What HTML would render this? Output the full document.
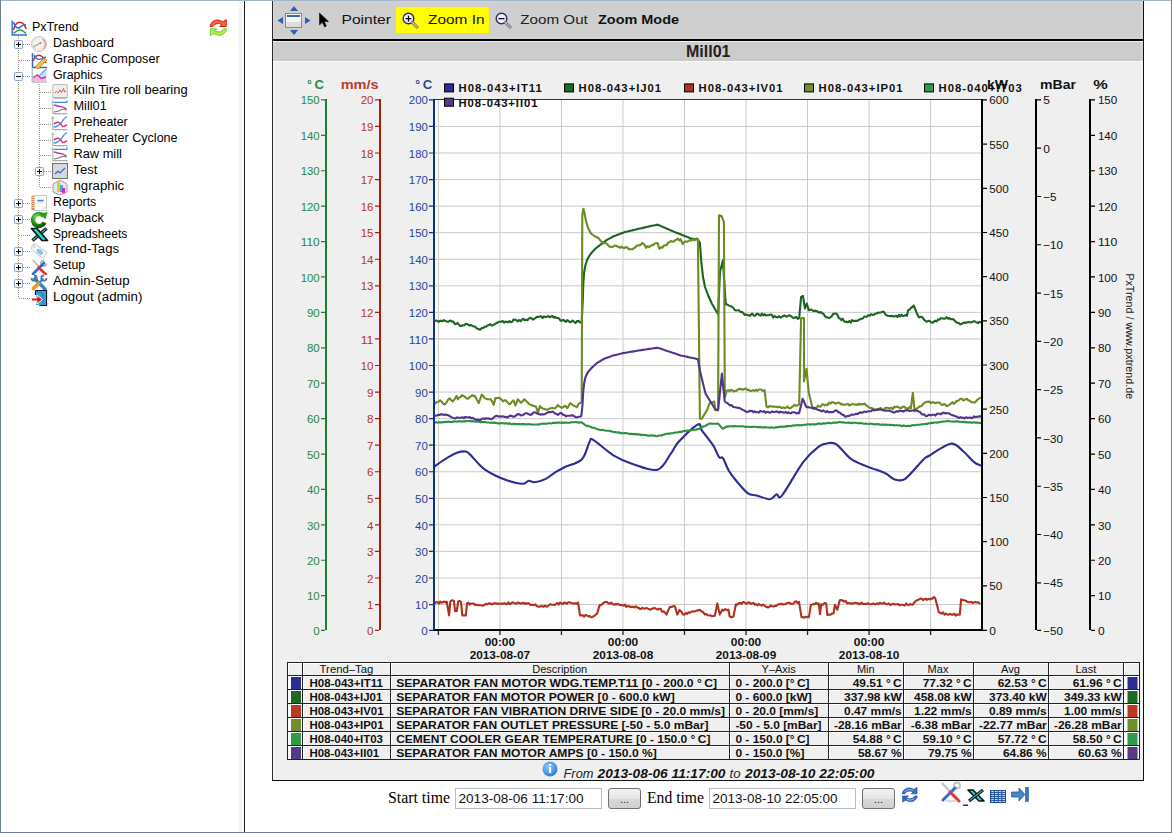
<!DOCTYPE html>
<html><head><meta charset="utf-8"><title>PxTrend</title>
<style>
html,body{margin:0;padding:0;width:1172px;height:833px;overflow:hidden;background:#fff}
svg{display:block}
text{font-family:"Liberation Sans",sans-serif}
</style></head><body>
<svg width="1172" height="833" viewBox="0 0 1172 833">
<rect x="0" y="0" width="1172" height="833" fill="#fff"/>
<line x1="18.5" y1="36" x2="18.5" y2="298" stroke="#9c9484" stroke-width="1" stroke-dasharray="1 1"/>
<line x1="39.5" y1="84" x2="39.5" y2="187" stroke="#9c9484" stroke-width="1" stroke-dasharray="1 1"/>
<line x1="23" y1="44.5" x2="31" y2="44.5" stroke="#9c9484" stroke-width="1" stroke-dasharray="1 1"/>
<line x1="19" y1="60.5" x2="31" y2="60.5" stroke="#9c9484" stroke-width="1" stroke-dasharray="1 1"/>
<line x1="23" y1="76.5" x2="31" y2="76.5" stroke="#9c9484" stroke-width="1" stroke-dasharray="1 1"/>
<line x1="40" y1="92.5" x2="52" y2="92.5" stroke="#9c9484" stroke-width="1" stroke-dasharray="1 1"/>
<line x1="40" y1="108.5" x2="52" y2="108.5" stroke="#9c9484" stroke-width="1" stroke-dasharray="1 1"/>
<line x1="40" y1="124.5" x2="52" y2="124.5" stroke="#9c9484" stroke-width="1" stroke-dasharray="1 1"/>
<line x1="40" y1="140.5" x2="52" y2="140.5" stroke="#9c9484" stroke-width="1" stroke-dasharray="1 1"/>
<line x1="40" y1="155.5" x2="52" y2="155.5" stroke="#9c9484" stroke-width="1" stroke-dasharray="1 1"/>
<line x1="44" y1="171.5" x2="52" y2="171.5" stroke="#9c9484" stroke-width="1" stroke-dasharray="1 1"/>
<line x1="40" y1="187.5" x2="52" y2="187.5" stroke="#9c9484" stroke-width="1" stroke-dasharray="1 1"/>
<line x1="23" y1="203.5" x2="31" y2="203.5" stroke="#9c9484" stroke-width="1" stroke-dasharray="1 1"/>
<line x1="23" y1="219.5" x2="31" y2="219.5" stroke="#9c9484" stroke-width="1" stroke-dasharray="1 1"/>
<line x1="19" y1="235.5" x2="31" y2="235.5" stroke="#9c9484" stroke-width="1" stroke-dasharray="1 1"/>
<line x1="23" y1="251.5" x2="31" y2="251.5" stroke="#9c9484" stroke-width="1" stroke-dasharray="1 1"/>
<line x1="23" y1="267.5" x2="31" y2="267.5" stroke="#9c9484" stroke-width="1" stroke-dasharray="1 1"/>
<line x1="23" y1="283.5" x2="31" y2="283.5" stroke="#9c9484" stroke-width="1" stroke-dasharray="1 1"/>
<line x1="19" y1="298.5" x2="31" y2="298.5" stroke="#9c9484" stroke-width="1" stroke-dasharray="1 1"/>
<text x="32.0" y="30.8" font-size="12" textLength="46.8" lengthAdjust="spacingAndGlyphs">PxTrend</text>
<rect x="14.5" y="40.5" width="8" height="8" rx="1" fill="#f4f4f4" stroke="#8ca6c6" stroke-width="1"/>
<rect x="16" y="44" width="5" height="1" fill="#000"/>
<rect x="18" y="42" width="1" height="5" fill="#000"/>
<text x="53.0" y="46.7" font-size="12" textLength="61.0" lengthAdjust="spacingAndGlyphs">Dashboard</text>
<text x="53.0" y="62.6" font-size="12" textLength="106.8" lengthAdjust="spacingAndGlyphs">Graphic Composer</text>
<rect x="14.5" y="72.5" width="8" height="8" rx="1" fill="#f4f4f4" stroke="#8ca6c6" stroke-width="1"/>
<rect x="16" y="76" width="5" height="1" fill="#000"/>
<text x="53.0" y="78.5" font-size="12" textLength="49.5" lengthAdjust="spacingAndGlyphs">Graphics</text>
<text x="73.5" y="94.4" font-size="12" textLength="114.1" lengthAdjust="spacingAndGlyphs">Kiln Tire roll bearing</text>
<text x="73.5" y="110.3" font-size="12" textLength="33.3" lengthAdjust="spacingAndGlyphs">Mill01</text>
<text x="73.5" y="126.2" font-size="12" textLength="54.199999999999996" lengthAdjust="spacingAndGlyphs">Preheater</text>
<text x="73.5" y="142.1" font-size="12" textLength="104.1" lengthAdjust="spacingAndGlyphs">Preheater Cyclone</text>
<text x="73.5" y="158.0" font-size="12" textLength="48.4" lengthAdjust="spacingAndGlyphs">Raw mill</text>
<rect x="35.5" y="167.5" width="8" height="8" rx="1" fill="#f4f4f4" stroke="#8ca6c6" stroke-width="1"/>
<rect x="37" y="171" width="5" height="1" fill="#000"/>
<rect x="39" y="169" width="1" height="5" fill="#000"/>
<text x="73.5" y="173.9" font-size="12" textLength="23.8" lengthAdjust="spacingAndGlyphs">Test</text>
<text x="73.5" y="189.8" font-size="12" textLength="50.699999999999996" lengthAdjust="spacingAndGlyphs">ngraphic</text>
<rect x="14.5" y="199.5" width="8" height="8" rx="1" fill="#f4f4f4" stroke="#8ca6c6" stroke-width="1"/>
<rect x="16" y="203" width="5" height="1" fill="#000"/>
<rect x="18" y="201" width="1" height="5" fill="#000"/>
<text x="53.0" y="205.7" font-size="12" textLength="43.3" lengthAdjust="spacingAndGlyphs">Reports</text>
<rect x="14.5" y="215.5" width="8" height="8" rx="1" fill="#f4f4f4" stroke="#8ca6c6" stroke-width="1"/>
<rect x="16" y="219" width="5" height="1" fill="#000"/>
<rect x="18" y="217" width="1" height="5" fill="#000"/>
<text x="53.0" y="221.6" font-size="12" textLength="50.8" lengthAdjust="spacingAndGlyphs">Playback</text>
<text x="53.0" y="237.5" font-size="12" textLength="74.3" lengthAdjust="spacingAndGlyphs">Spreadsheets</text>
<rect x="14.5" y="247.5" width="8" height="8" rx="1" fill="#f4f4f4" stroke="#8ca6c6" stroke-width="1"/>
<rect x="16" y="251" width="5" height="1" fill="#000"/>
<rect x="18" y="249" width="1" height="5" fill="#000"/>
<text x="53.0" y="253.4" font-size="12" textLength="66.1" lengthAdjust="spacingAndGlyphs">Trend-Tags</text>
<rect x="14.5" y="263.5" width="8" height="8" rx="1" fill="#f4f4f4" stroke="#8ca6c6" stroke-width="1"/>
<rect x="16" y="267" width="5" height="1" fill="#000"/>
<rect x="18" y="265" width="1" height="5" fill="#000"/>
<text x="53.0" y="269.3" font-size="12" textLength="32.199999999999996" lengthAdjust="spacingAndGlyphs">Setup</text>
<rect x="14.5" y="279.5" width="8" height="8" rx="1" fill="#f4f4f4" stroke="#8ca6c6" stroke-width="1"/>
<rect x="16" y="283" width="5" height="1" fill="#000"/>
<rect x="18" y="281" width="1" height="5" fill="#000"/>
<text x="53.0" y="285.2" font-size="12" textLength="76.5" lengthAdjust="spacingAndGlyphs">Admin-Setup</text>
<text x="53.0" y="301.1" font-size="12" textLength="89.39999999999999" lengthAdjust="spacingAndGlyphs">Logout (admin)</text>
<g transform="translate(11,20)"><path d="M1.2 0.5 V15 H16" fill="none" stroke="#2f6fd0" stroke-width="1.4"/><path d="M2.5 10 C4 4,6.5 2,9 2.2 C12 2.5,14 5,15 9" fill="none" stroke="#f02020" stroke-width="1.6"/><path d="M2.5 2 C4 7,6 9,8.5 7.5 C11 6,12.5 4,15 5" fill="none" stroke="#2a6ee8" stroke-width="1.6"/><path d="M2.5 13.5 C5 11,7 9.5,9.5 10 C12 10.5,13.5 12,15 13.5" fill="none" stroke="#3a9a3a" stroke-width="1.5"/></g>
<g transform="translate(31,36)"><circle cx="8" cy="8" r="7.5" fill="#f2f2f2" stroke="#c8c8c8"/><circle cx="8" cy="8" r="6" fill="none" stroke="#dcdcdc" stroke-width="0.8" stroke-dasharray="1 1.5"/><path d="M11.5 3 A6 6 0 0 1 12 13" fill="none" stroke="#f0a090" stroke-width="1.5"/><path d="M4 10 L9.5 7" stroke="#e06060" stroke-width="1"/><circle cx="9.5" cy="7" r="0.9" fill="#888"/><path d="M2.5 9.5 L4 11.5" stroke="#7fdf7f" stroke-width="1.5"/></g>
<g transform="translate(31,52)"><path d="M1.5 1 V15.5 H16" fill="none" stroke="#2f6fd0" stroke-width="1.5"/><path d="M2 9 C5 1,11 1,15 11" fill="none" stroke="#f02020" stroke-width="1.6"/><path d="M3 3 C6 10,10 7,15 5" fill="none" stroke="#2a6ee8" stroke-width="1.4"/><path d="M4 15 L13 6 L16 8 L7 17 Z" fill="#f0c040" stroke="#c08020" stroke-width="0.8"/></g>
<g transform="translate(31,68)"><path d="M1.2 1 V14 H16" fill="none" stroke="#9a9a9a" stroke-width="0.9"/><path d="M8 13.5 C10 7,12 3,15.5 1 V13.5 Z" fill="#c8dcf8"/><path d="M8 8.5 C10.5 5,12.5 2.5,15.5 1.2" fill="none" stroke="#5a9af0" stroke-width="1.2"/><path d="M2 9.5 L6.5 6.8 L10.2 10.4 L15 9 V13.6 H2 Z" fill="#f4b8e4"/><path d="M2 9.5 L6.5 6.8 L10.2 10.4 L15 9" fill="none" stroke="#d030a0" stroke-width="1.4"/><path d="M4 13.8 V15 M8 13.8 V15 M12 13.8 V15" stroke="#a0a0a0" stroke-width="0.7"/></g>
<g transform="translate(52,84)"><rect x="0.8" y="0.5" width="14.5" height="14" rx="1.5" fill="#eeeeee" stroke="#bcbcbc"/><path d="M1.5 13.5 H15" stroke="#a8a8a8" stroke-width="0.8"/><path d="M2.5 9 L4.5 7.5 L6 9 L8 6 L9.5 8.5 L11.5 4.5 L12.5 8 L14 7" fill="none" stroke="#e05a5a" stroke-width="1"/></g>
<g transform="translate(52,100)"><path d="M0.8 1.5 V13.6 H15.5" fill="none" stroke="#9a9a9a" stroke-width="0.9"/><path d="M-0.4 2.6 L0.8 0.6 L2 2.6" fill="none" stroke="#9a9a9a" stroke-width="0.7"/><path d="M4 13.6 V15 M7.5 13.6 V15 M11 13.6 V15 M14.5 13.6 V15" stroke="#a8a8a8" stroke-width="0.7"/><path d="M2 2.4 H14.5 L15.5 0.6" fill="none" stroke="#3a8af0" stroke-width="1.3"/><path d="M1.8 4.8 C4 5.5,5 6,7 6.2 C9 6.4,11 6.5,14.6 9" fill="none" stroke="#d03a90" stroke-width="1.4"/><path d="M1.8 12 C4 11.8,6 11.2,8 10.4 C10 9.5,12 8.2,14.6 10.2" fill="none" stroke="#707070" stroke-width="1.1"/></g>
<g transform="translate(52,116)"><path d="M0.8 1.5 V13.6 H15.5" fill="none" stroke="#9a9a9a" stroke-width="0.9"/><path d="M-0.4 2.6 L0.8 0.6 L2 2.6" fill="none" stroke="#9a9a9a" stroke-width="0.7"/><path d="M4 13.6 V15 M7.5 13.6 V15 M11 13.6 V15 M14.5 13.6 V15" stroke="#a8a8a8" stroke-width="0.7"/><path d="M1.8 11 C5 11,7 9.5,9 7 C11 4,12.5 1.5,15 0.8" fill="none" stroke="#4a90f0" stroke-width="1.4"/><path d="M1.8 8 C3.5 7,5.5 5.5,7 6.5 C8.5 7.5,10 10.5,11 10.5 C12.5 10.5,13.5 9.5,15 9" fill="none" stroke="#d02a70" stroke-width="1.4"/></g>
<g transform="translate(52,132)"><path d="M0.8 1.5 V13.6 H15.5" fill="none" stroke="#9a9a9a" stroke-width="0.9"/><path d="M-0.4 2.6 L0.8 0.6 L2 2.6" fill="none" stroke="#9a9a9a" stroke-width="0.7"/><path d="M4 13.6 V15 M7.5 13.6 V15 M11 13.6 V15 M14.5 13.6 V15" stroke="#a8a8a8" stroke-width="0.7"/><path d="M1.8 11 C5 11,7 9.5,9 7 C11 4,12.5 1.5,15 0.8" fill="none" stroke="#4a90f0" stroke-width="1.4"/><path d="M1.8 8 C3.5 7,5.5 5.5,7 6.5 C8.5 7.5,10 10.5,11 10.5 C12.5 10.5,13.5 9.5,15 9" fill="none" stroke="#d02a70" stroke-width="1.4"/></g>
<g transform="translate(52,147)"><path d="M0.8 1.5 V13.6 H15.5" fill="none" stroke="#9a9a9a" stroke-width="0.9"/><path d="M-0.4 2.6 L0.8 0.6 L2 2.6" fill="none" stroke="#9a9a9a" stroke-width="0.7"/><path d="M4 13.6 V15 M7.5 13.6 V15 M11 13.6 V15 M14.5 13.6 V15" stroke="#a8a8a8" stroke-width="0.7"/><path d="M2 2.4 H14.5 L15.5 0.6" fill="none" stroke="#3a8af0" stroke-width="1.3"/><path d="M1.8 4.8 C4 5.5,5 6,7 6.2 C9 6.4,11 6.5,14.6 9" fill="none" stroke="#d03a90" stroke-width="1.4"/><path d="M1.8 12 C4 11.8,6 11.2,8 10.4 C10 9.5,12 8.2,14.6 10.2" fill="none" stroke="#707070" stroke-width="1.1"/></g>
<g transform="translate(52,163)"><rect x="0.5" y="0.5" width="15" height="15" fill="#d8d8d8" stroke="#707070"/><path d="M3 11 L6 8 L8 10 L13 5" fill="none" stroke="#4060e0" stroke-width="1.2"/></g>
<g transform="translate(52,179)"><path d="M1 5 L8 1 L15 5 V13 L8 16 L1 13Z" fill="#e8e8e8" stroke="#a0a0a0"/><rect x="5" y="2" width="3" height="11" fill="#e0d020"/><rect x="8" y="6" width="3" height="7" fill="#20c0d0"/><rect x="10" y="9" width="3" height="5" fill="#e020e0"/></g>
<g transform="translate(31,195)"><rect x="2.5" y="0.5" width="13" height="15" fill="#fbfbfb" stroke="#c8c8c8"/><path d="M11 15.5 L15.5 11" stroke="#d0d0d0" stroke-width="1"/><rect x="0.5" y="1" width="3" height="14" fill="#d88850"/><path d="M1 2.5 H3.5 M1 4.5 H3.5 M1 6.5 H3.5 M1 8.5 H3.5 M1 10.5 H3.5 M1 12.5 H3.5" stroke="#f4e0d0" stroke-width="0.8"/><rect x="6" y="4" width="7" height="4" fill="#dfe8f6"/><rect x="6.5" y="5" width="6" height="1.2" fill="#4a7ed0"/></g>
<g transform="translate(31,211)"><defs><radialGradient id="pbg" cx="0.35" cy="0.3" r="0.8"><stop offset="0" stop-color="#8ee070"/><stop offset="0.6" stop-color="#2a9a20"/><stop offset="1" stop-color="#0a5a0a"/></radialGradient></defs><path d="M12.5 5 A6 6 0 1 0 13.5 11.5" fill="none" stroke="url(#pbg)" stroke-width="4.4"/><path d="M8.5 2.5 L16.5 1 L14.5 8.5 Z" fill="#2c9c22"/></g>
<g transform="translate(31,227)"><path d="M15.5 1.5 L1.5 13.5" stroke="#111" stroke-width="3.4"/><path d="M15 1.9 L2 13.1" stroke="#30c8c0" stroke-width="1.2"/><path d="M0.5 1.5 H6 L16.5 13.5 H11 Z" fill="#20d8d8" stroke="#111" stroke-width="1.7" stroke-linejoin="round"/></g>
<g transform="translate(31,243)"><path d="M1 2.5 L4 0.5 L16 9.5 L12 15.5 L0.5 6.5 Z" fill="#f6f8fb" stroke="#c4c8d0" stroke-width="1"/><circle cx="3.3" cy="3.5" r="1" fill="#fff" stroke="#b0b4bc" stroke-width="0.6"/><path d="M6 6 L10 6.5 L12.5 10 L10 12.5 L5.5 9 Z" fill="#8ec0f0"/></g>
<g transform="translate(31,259)"><path d="M1.5 1 L9 8.5" stroke="#b8b8b8" stroke-width="1.6"/><path d="M13 1.5 A2.8 2.8 0 1 0 15.5 4.5" fill="none" stroke="#b0b0b0" stroke-width="1.8"/><path d="M13 4 L2 15" stroke="#2a6ae0" stroke-width="2.6" stroke-linecap="round"/><path d="M7.5 8.5 L15 15.5" stroke="#e03030" stroke-width="2.6" stroke-linecap="round"/><path d="M3 16 H14" stroke="#d8d8d8" stroke-width="0.8"/></g>
<g transform="translate(31,275)"><path d="M3.5 3.5 L14 14" stroke="#3a86cc" stroke-width="3.4" stroke-linecap="round"/><path d="M12.5 3.5 L3 13" stroke="#3a86cc" stroke-width="1.8"/><circle cx="3.2" cy="3.2" r="2.6" fill="none" stroke="#4a7494" stroke-width="1.6"/><circle cx="12.8" cy="3.2" r="2.6" fill="none" stroke="#4a7494" stroke-width="1.6"/><rect x="0" y="0" width="3" height="3" fill="#fff"/><rect x="13" y="0" width="3" height="3" fill="#fff"/><path d="M7.5 8.5 L2.5 13.5" stroke="#f29420" stroke-width="3.8" stroke-linecap="round"/></g>
<g transform="translate(31,290)"><path d="M4.5 0.5 H15.5 V15.5 H8.5" fill="#3aa0e0" stroke="#101820" stroke-width="1.2"/><rect x="5" y="1" width="10" height="14" fill="#3aa0e0"/><path d="M5 1 L12 4 V15" fill="none" stroke="#2070b0" stroke-width="0.8"/><path d="M4.5 0.5 V5" stroke="#101820" stroke-width="1.2"/><path d="M0.5 8 H6 V5 L11.5 9.5 L6 14 V11 H0.5 Z" fill="#e01818" stroke="#fff" stroke-width="1"/></g>
<g transform="translate(209.5,18.8) scale(1.1)"><path d="M0.5 7 C1 3,5 0.3,9 1.4 L12 2.6 L15.2 0.8 L15.2 7 L9.3 7 L11.3 5.3 C9 3.9,5 3.6,3 7 Z" fill="#f46a3a" stroke="#d41a10" stroke-width="0.9"/><path d="M15.5 9.2 C15 13,11 15.7,7 14.6 L4 13.4 L0.8 15.2 L0.8 9.2 L6.7 9.2 L4.7 10.9 C7 12.3,11 12.6,13 9.2 Z" fill="#b4ec50" stroke="#6ccc20" stroke-width="0.9"/></g>
<rect x="272" y="1" width="1" height="780" fill="#2a2a2a"/>
<rect x="273" y="1" width="870" height="38" fill="#cfcfcf"/>
<rect x="273" y="1" width="870" height="1" fill="#d3d2d1"/>
<rect x="273" y="39" width="870" height="2" fill="#000"/>
<rect x="273" y="41" width="870" height="1" fill="#f2f2f2"/>
<rect x="273" y="42" width="870" height="19" fill="#cccccc"/>
<rect x="273" y="61" width="870" height="719" fill="#efefef"/>
<rect x="273" y="61" width="870" height="1" fill="#f8f8f8"/>
<rect x="273" y="61" width="1" height="719" fill="#f8f8f8"/>
<rect x="1141" y="41" width="1" height="739" fill="#f6f6f6"/>
<rect x="273" y="42" width="1" height="18" fill="#d6d6d6"/>
<rect x="1141" y="42" width="1" height="18" fill="#d8d8d8"/>
<rect x="1143" y="1" width="1" height="780" fill="#111"/>
<rect x="1141" y="1" width="1" height="38" fill="#dadada"/>
<rect x="272" y="780" width="872" height="1" fill="#111"/>
<rect x="273" y="1" width="1" height="38" fill="#d8d8d8"/>
<rect x="273" y="37" width="870" height="1" fill="#d6d6d6"/>
<rect x="273" y="59" width="870" height="1" fill="#c8c8c8"/>
<g><path d="M290 11 L294 6 L298 11 Z" fill="#2a5fb0"/><path d="M290 30 L294 35 L298 30 Z" fill="#2a5fb0"/><path d="M283 17 L277.5 20.5 L283 24 Z" fill="#2a5fb0"/><path d="M305 17 L310.5 20.5 L305 24 Z" fill="#2a5fb0"/><rect x="285.5" y="13.5" width="16" height="14" fill="#f4f4f4" stroke="#8a8a8a"/><rect x="287" y="15" width="13" height="2" fill="#3a68b0"/><rect x="286" y="22" width="15" height="5" fill="#dcdcdc"/></g>
<path d="M319.5 13 L319.5 25 L322.3 22.3 L324.6 27 L326.4 26 L324.2 21.5 L328.5 21.5 Z" fill="#000" stroke="#000" stroke-width="0.5"/>
<text x="341.5" y="23.5" font-size="12.5" fill="#111" textLength="49.5" lengthAdjust="spacingAndGlyphs">Pointer</text>
<rect x="396" y="7" width="93" height="26" fill="#ffff00"/>
<rect x="396" y="7" width="93" height="1" fill="#e8e8a0"/>
<g transform="translate(402,12)"><circle cx="6.5" cy="6.5" r="5.3" fill="#eef0ff" stroke="#2a2a6a" stroke-width="1.4"/><path d="M10.5 10.5 L15 15" stroke="#707070" stroke-width="3" stroke-linecap="round"/><path d="M10.5 10.5 L15 15" stroke="#c8c0b8" stroke-width="1.2" stroke-linecap="round"/><rect x="3.5" y="6" width="6" height="1.3" fill="#000"/><rect x="5.85" y="3.6" width="1.3" height="6" fill="#000"/></g>
<text x="428" y="23.5" font-size="12.5" fill="#111" textLength="56.5" lengthAdjust="spacingAndGlyphs">Zoom In</text>
<g transform="translate(495,12)"><circle cx="6.5" cy="6.5" r="5.3" fill="#eef0ff" stroke="#2a2a6a" stroke-width="1.4"/><path d="M10.5 10.5 L15 15" stroke="#707070" stroke-width="3" stroke-linecap="round"/><path d="M10.5 10.5 L15 15" stroke="#c8c0b8" stroke-width="1.2" stroke-linecap="round"/><rect x="3.5" y="6" width="6" height="1.3" fill="#000"/></g>
<text x="520.3" y="23.5" font-size="12.5" fill="#222" textLength="67.5" lengthAdjust="spacingAndGlyphs">Zoom Out</text>
<text x="598" y="24" font-size="12.5" font-weight="bold" fill="#111" textLength="81" lengthAdjust="spacingAndGlyphs">Zoom Mode</text>
<text x="686" y="57" font-size="16" font-weight="bold" fill="#222" textLength="44.5" lengthAdjust="spacingAndGlyphs">Mill01</text>
<rect x="435" y="100" width="546" height="529" fill="#fff"/>
<path d="M435 126.46H981 M435 153.02H981 M435 179.58H981 M435 206.14H981 M435 232.70H981 M435 259.26H981 M435 285.82H981 M435 312.38H981 M435 338.94H981 M435 365.50H981 M435 392.06H981 M435 418.62H981 M435 445.18H981 M435 471.74H981 M435 498.30H981 M435 524.86H981 M435 551.42H981 M435 577.98H981 M435 604.54H981 M438.40 100V629 M499.92 100V629 M561.45 100V629 M622.97 100V629 M684.50 100V629 M746.02 100V629 M807.55 100V629 M869.08 100V629 M930.60 100V629" stroke="#c9c9c9" stroke-width="1" fill="none"/>
<g clip-path="url(#plotclip)">
<defs><clipPath id="plotclip"><rect x="435" y="100" width="546" height="529"/></clipPath></defs>
<path d="M434.8 466.3 C435.9 465.5 439.1 463.1 441.5 461.5 C443.9 459.9 446.6 458.1 449.2 456.7 C451.8 455.2 454.2 453.7 456.9 452.8 C459.6 451.9 463.3 451.2 465.5 451.5 C467.7 451.8 467.9 452.4 470.3 454.7 C472.7 457.0 477.3 462.7 479.9 465.3 C482.5 467.9 483.1 468.4 485.7 470.1 C488.3 471.8 491.8 473.8 495.3 475.5 C498.8 477.2 503.3 479.1 506.8 480.3 C510.3 481.6 513.5 482.4 516.4 483.0 C519.3 483.6 522.0 484.0 524.1 483.6 C526.2 483.2 527.1 480.9 528.9 480.7 C530.7 480.5 532.0 482.5 534.7 482.2 C537.4 481.9 541.9 480.7 545.3 479.1 C548.7 477.5 551.7 474.6 554.9 472.6 C558.1 470.6 560.0 469.4 564.5 467.2 C569.0 465.0 577.6 463.6 581.7 459.5 C585.9 455.4 587.5 445.6 589.4 442.3 C591.3 439.0 589.2 437.7 593.2 439.9 C597.2 442.1 606.8 451.3 613.4 455.3 C620.0 459.3 625.2 461.5 632.6 463.9 C640.0 466.3 651.2 471.5 657.6 469.7 C664.0 467.9 667.5 457.9 671.0 453.3 C674.5 448.7 674.2 446.6 678.7 441.8 C683.2 437.0 694.0 426.4 697.9 424.5 C701.8 422.6 699.2 426.8 701.8 430.3 C704.4 433.8 710.4 441.1 713.3 445.6 C716.2 450.1 717.5 455.1 719.1 457.2 C720.7 459.3 721.3 455.9 722.9 458.1 C724.5 460.3 726.7 467.1 728.7 470.6 C730.7 474.1 731.8 475.5 735.0 479.3 C738.2 483.1 744.1 490.5 747.7 493.2 C751.3 495.9 752.9 494.4 756.6 495.4 C760.3 496.4 766.6 499.4 769.9 499.2 C773.2 499.0 774.6 494.9 776.6 494.3 C778.6 493.7 777.7 500.8 782.1 495.4 C786.5 490.0 797.1 470.2 803.2 462.1 C809.3 454.0 814.6 449.7 818.7 446.6 C822.8 443.5 824.6 443.7 827.6 443.3 C830.6 442.9 832.6 441.8 836.5 444.4 C840.4 447.0 845.7 455.1 850.9 458.8 C856.1 462.5 861.8 464.2 867.5 466.6 C873.2 469.0 880.8 471.1 885.3 473.2 C889.8 475.3 890.9 478.3 894.2 479.2 C897.5 480.1 900.4 482.0 905.2 478.8 C910.0 475.6 918.9 463.8 923.0 459.9 C927.1 456.0 925.0 458.2 929.6 455.5 C934.2 452.8 945.2 444.4 950.7 443.7 C956.2 442.9 959.0 447.9 962.9 451.0 C966.8 454.1 971.0 459.7 974.0 462.1 C977.0 464.5 979.6 464.9 980.7 465.5" fill="none" stroke="#2c2c94" stroke-width="2.1" stroke-linejoin="round" stroke-linecap="round"/>
<path d="M434.8 320.7 L436.1 320.6 L437.4 320.9 L438.7 321.9 L440.0 320.8 L441.3 320.9 L442.7 321.1 L444.0 320.1 L445.3 321.0 L446.6 321.4 L447.9 321.8 L449.2 321.1 L450.6 320.5 L451.9 321.6 L453.3 321.5 L454.7 323.9 L456.1 324.1 L457.4 322.9 L458.8 324.6 L460.2 325.9 L461.5 325.9 L462.9 325.2 L464.3 325.1 L465.7 324.0 L467.0 323.7 L468.4 325.0 L469.7 325.6 L471.0 325.0 L472.4 325.8 L473.7 326.5 L475.0 326.5 L476.4 328.2 L477.7 328.7 L479.0 329.4 L480.4 329.6 L481.9 328.1 L483.3 327.8 L484.7 326.8 L486.2 326.6 L487.6 325.5 L489.0 325.0 L490.3 324.1 L491.7 325.6 L493.1 325.2 L494.5 324.4 L495.8 323.6 L497.2 322.7 L498.6 322.1 L499.9 321.7 L501.3 321.7 L502.7 321.0 L504.1 322.7 L505.4 321.6 L506.8 321.7 L508.2 322.4 L509.5 321.0 L510.9 322.3 L512.3 321.8 L513.7 319.4 L515.0 319.7 L516.4 320.3 L517.8 321.3 L519.1 320.1 L520.5 321.3 L521.9 319.7 L523.3 318.8 L524.6 320.2 L526.0 319.8 L527.4 320.3 L528.7 318.7 L530.1 317.9 L531.5 318.3 L532.9 319.6 L534.2 318.8 L535.6 317.9 L537.0 316.8 L538.4 317.0 L539.8 316.5 L541.2 316.2 L542.6 318.0 L544.0 316.3 L545.4 317.2 L546.8 316.7 L548.2 316.0 L549.6 317.2 L551.0 316.5 L552.4 316.0 L553.7 317.7 L555.0 316.8 L556.4 318.0 L557.8 317.9 L559.1 318.4 L560.5 320.7 L561.8 320.6 L563.1 319.8 L564.5 320.7 L565.9 321.8 L567.2 320.2 L568.6 320.9 L569.9 322.2 L571.3 321.8 L572.6 320.5 L574.0 321.7 L575.5 323.0 L577.1 321.0 L578.6 321.1 L580.2 322.5 L581.7 321.8 L582.8 300.0 L583.3 283.0 L584.2 272.0 L585.5 265.0 L587.5 259.0 L589.2 256.2 L591.0 253.5 L592.3 252.0 L593.7 250.5 L595.0 249.0 L596.7 247.7 L598.3 246.3 L600.0 245.0 L601.5 243.9 L603.0 242.8 L604.5 241.6 L606.0 240.5 L607.4 239.7 L608.8 238.9 L610.2 238.1 L611.6 237.3 L613.0 236.5 L614.3 236.0 L615.7 235.5 L617.0 235.0 L618.3 234.5 L619.7 234.0 L621.0 233.5 L622.3 233.0 L623.7 232.5 L625.0 232.0 L626.4 231.7 L627.7 231.4 L629.1 231.0 L630.5 230.7 L631.8 230.4 L633.2 230.1 L634.5 229.8 L635.9 229.5 L637.3 229.1 L638.6 228.8 L640.0 228.5 L641.4 228.2 L642.7 227.9 L644.1 227.6 L645.4 227.3 L646.8 227.0 L648.1 226.7 L649.5 226.4 L650.8 226.1 L652.2 225.8 L653.5 225.5 L654.9 225.2 L656.2 224.9 L657.6 224.6 L658.9 225.2 L660.3 225.8 L661.6 226.4 L663.0 227.0 L664.3 227.6 L665.6 228.1 L667.0 228.7 L668.3 229.3 L669.7 229.9 L671.0 230.5 L672.4 231.1 L673.7 231.6 L675.1 232.2 L676.5 232.7 L677.9 233.2 L679.2 233.8 L680.6 234.3 L682.0 234.9 L683.3 235.4 L684.7 236.0 L686.1 236.5 L687.5 237.1 L688.8 237.6 L690.2 238.2 L691.7 238.5 L693.3 238.8 L694.8 239.0 L696.4 239.3 L697.9 239.6 L699.9 243.0 L701.3 262.0 L703.0 277.0 L705.0 287.0 L706.5 291.0 L708.0 295.0 L709.3 298.0 L710.7 301.0 L712.0 304.0 L713.7 306.8 L715.3 309.7 L717.0 312.5 L718.1 314.1 L720.0 271.8 L721.5 266.1 L722.9 260.3 L724.3 282.4 L725.8 304.5 L727.2 304.5 L728.7 305.4 L730.3 306.1 L731.9 306.7 L733.4 308.0 L735.0 310.3 L736.4 310.5 L737.7 310.3 L739.1 310.3 L740.4 311.9 L741.8 312.0 L743.2 312.9 L744.6 314.9 L745.9 314.4 L747.3 315.1 L748.6 315.2 L750.0 315.9 L751.3 314.1 L752.6 313.9 L754.0 315.8 L755.3 315.5 L756.6 314.0 L757.9 313.7 L759.3 315.1 L760.6 315.6 L761.9 313.5 L763.3 315.4 L764.6 314.2 L766.0 315.6 L767.5 315.2 L768.9 315.1 L770.4 314.6 L771.8 314.8 L773.2 317.6 L774.7 316.1 L776.1 317.1 L777.5 317.5 L779.0 316.2 L780.4 317.6 L781.9 316.9 L783.3 315.9 L784.7 315.5 L786.2 316.8 L787.6 316.1 L789.1 315.2 L790.5 315.9 L792.0 317.0 L793.4 318.0 L794.9 317.6 L796.3 317.0 L797.8 318.8 L799.2 318.0 L801.1 296.9 L803.0 295.9 L804.9 308.4 L806.8 303.6 L808.8 310.3 L810.1 309.8 L811.5 309.6 L812.8 310.6 L814.2 311.3 L815.5 310.6 L816.8 311.2 L818.2 312.0 L819.5 312.8 L820.9 312.0 L822.2 313.2 L823.5 313.8 L824.9 316.1 L826.2 317.3 L827.6 317.4 L828.9 318.0 L830.4 317.4 L831.8 316.1 L833.2 313.9 L834.7 313.8 L836.0 313.6 L837.4 314.6 L838.7 317.9 L840.0 318.4 L841.3 320.1 L842.6 318.6 L844.0 321.2 L845.3 321.9 L846.7 321.7 L848.0 322.2 L849.4 321.0 L850.8 322.6 L852.2 320.1 L853.5 321.2 L854.9 320.9 L856.2 320.9 L857.6 320.8 L858.9 319.8 L860.3 319.1 L861.6 318.8 L862.9 318.5 L864.3 316.5 L865.6 316.7 L867.0 316.7 L868.3 315.1 L869.7 315.7 L871.1 314.2 L872.4 314.9 L873.8 314.8 L875.2 313.7 L876.6 313.5 L878.0 312.6 L879.3 312.8 L880.7 312.5 L882.1 311.9 L883.5 311.5 L885.0 313.7 L886.4 315.3 L887.8 315.7 L889.3 316.0 L890.7 316.1 L892.1 315.8 L893.4 316.6 L894.8 316.2 L896.2 315.8 L897.5 316.8 L898.9 314.8 L900.3 316.5 L901.6 314.6 L903.0 316.1 L904.4 315.7 L905.7 315.0 L907.1 315.7 L908.0 310.3 L909.5 309.6 L910.9 307.9 L912.3 307.0 L913.8 305.5 L915.7 310.3 L917.6 315.1 L919.1 317.4 L920.7 316.8 L922.2 317.3 L923.8 319.2 L925.3 320.9 L926.8 321.7 L928.2 320.8 L929.6 321.0 L931.1 322.2 L932.5 322.8 L933.9 321.7 L935.3 320.7 L936.7 321.4 L938.1 319.4 L939.4 319.8 L940.8 318.2 L942.2 318.3 L943.6 318.8 L945.0 318.6 L946.4 317.1 L947.8 318.7 L949.2 318.0 L950.6 319.1 L952.0 319.1 L953.4 319.2 L954.8 320.7 L956.2 322.2 L957.6 322.9 L959.0 323.1 L960.4 324.4 L961.8 323.8 L963.1 323.0 L964.5 322.5 L965.8 323.0 L967.2 322.3 L968.5 321.9 L969.8 322.2 L971.2 322.5 L972.5 321.9 L973.9 321.2 L975.2 321.5 L976.7 322.6 L978.1 323.1 L979.5 321.9 L981.0 322.2" fill="none" stroke="#1b6520" stroke-width="2.1" stroke-linejoin="round" stroke-linecap="round"/>
<path d="M434.8 603.4 L436.1 602.3 L437.4 601.9 L438.8 603.6 L440.1 601.5 L441.4 602.8 L442.7 602.3 L444.1 601.5 L445.4 602.4 L446.7 601.5 L449.1 615.4 L450.3 601.5 L452.1 600.2 L453.9 601.0 L455.1 611.0 L456.8 611.0 L458.2 601.5 L459.6 600.9 L461.0 602.0 L462.3 615.4 L464.1 615.3 L465.8 615.4 L467.0 603.4 L468.4 602.6 L469.7 604.6 L471.1 603.5 L472.4 603.5 L473.8 603.5 L475.1 605.0 L476.4 604.8 L477.8 605.1 L479.1 605.3 L480.5 605.3 L481.8 605.5 L483.1 605.7 L484.4 605.0 L485.8 603.9 L487.1 604.4 L488.4 603.6 L489.8 603.2 L491.1 604.1 L492.4 604.5 L493.7 603.3 L495.1 603.4 L496.4 603.4 L497.7 604.1 L499.0 603.6 L500.4 603.7 L501.7 603.4 L503.0 603.9 L504.4 603.1 L505.7 603.9 L507.1 604.1 L508.4 602.3 L509.8 604.1 L511.1 603.6 L512.5 602.2 L513.8 602.9 L515.1 603.2 L516.5 603.8 L517.8 602.6 L519.2 603.0 L520.5 603.6 L521.9 603.4 L523.2 602.7 L524.6 603.9 L525.9 603.1 L527.3 603.8 L528.7 603.1 L530.0 604.5 L531.4 604.9 L532.8 604.8 L534.1 605.2 L535.5 604.4 L536.8 606.2 L538.2 606.6 L539.6 606.8 L540.9 606.1 L542.3 606.3 L543.7 606.7 L545.0 605.5 L546.4 606.6 L547.8 606.3 L549.1 604.9 L550.5 604.1 L551.8 604.7 L553.2 604.8 L554.6 605.0 L555.9 604.2 L557.3 603.0 L558.7 604.5 L560.0 602.6 L561.4 603.4 L562.8 604.0 L564.2 602.6 L565.6 602.9 L567.0 603.8 L568.4 602.3 L569.8 602.3 L571.1 603.0 L572.5 603.4 L573.9 603.6 L575.3 603.2 L576.7 603.7 L578.1 602.7 L580.0 615.4 L581.5 615.4 L582.9 615.4 L584.3 616.6 L585.6 614.9 L587.0 615.5 L588.3 616.4 L589.7 616.1 L591.0 617.3 L592.4 617.0 L594.0 616.1 L595.6 614.7 L597.2 613.4 L599.6 605.1 L601.1 605.1 L602.6 603.7 L604.1 602.4 L605.6 602.0 L607.0 602.0 L608.4 603.3 L609.8 603.7 L611.2 602.5 L612.6 604.2 L614.1 604.7 L615.5 604.0 L616.9 604.4 L618.3 603.9 L619.7 604.9 L621.1 605.1 L622.4 605.3 L623.8 605.7 L625.1 604.7 L626.4 606.9 L627.7 606.1 L629.1 606.1 L630.4 607.2 L631.7 606.8 L633.0 606.9 L634.4 607.5 L635.7 606.3 L637.0 607.6 L638.4 607.5 L639.7 608.9 L641.0 609.0 L642.3 607.8 L643.7 608.4 L645.0 608.7 L646.4 607.9 L647.9 608.6 L649.3 609.4 L650.7 609.6 L652.1 608.6 L653.6 608.3 L655.0 608.0 L656.4 609.0 L657.9 609.6 L659.3 608.7 L660.7 609.1 L662.2 611.7 L663.6 611.2 L665.1 612.7 L666.5 614.6 L668.3 610.1 L670.1 606.8 L671.7 607.0 L673.3 606.1 L674.9 606.3 L677.3 614.6 L679.6 609.9 L681.4 611.9 L683.2 614.6 L684.6 614.5 L686.0 612.9 L687.4 613.9 L688.8 612.2 L690.2 612.7 L691.6 611.7 L693.0 611.2 L694.4 611.5 L695.8 610.9 L697.2 610.4 L698.6 610.1 L700.0 609.9 L701.7 611.5 L703.3 612.3 L705.0 614.6 L706.4 614.1 L707.8 615.3 L709.2 615.5 L710.6 615.4 L712.0 616.3 L713.4 616.0 L714.8 615.9 L717.3 603.5 L719.8 614.6 L722.3 609.7 L723.8 610.5 L725.4 609.1 L727.0 610.2 L728.5 609.7 L729.7 616.6 L731.5 617.3 L733.4 616.6 L735.9 604.3 L737.3 604.9 L738.8 603.2 L740.2 602.9 L741.6 603.9 L743.1 602.0 L744.5 602.3 L745.8 603.6 L747.1 603.6 L748.4 602.2 L749.7 602.7 L751.0 604.0 L752.3 603.2 L753.6 603.0 L754.9 604.9 L756.2 604.2 L757.6 605.3 L758.9 604.0 L760.2 604.9 L761.5 605.7 L762.8 604.5 L764.1 605.1 L765.4 606.4 L766.7 607.1 L768.0 607.5 L769.3 606.7 L770.6 605.6 L772.0 606.3 L773.3 606.6 L774.7 605.8 L776.0 606.0 L777.4 604.7 L778.8 604.2 L780.1 604.1 L781.4 603.7 L782.8 604.6 L784.1 604.3 L785.5 604.2 L786.9 603.0 L788.2 602.9 L789.5 602.7 L790.9 603.9 L792.2 604.0 L793.6 603.6 L795.0 601.6 L796.3 601.3 L797.6 603.0 L799.0 601.8 L801.5 617.1 L803.0 617.0 L804.5 617.7 L805.9 616.7 L807.4 617.0 L808.9 617.1 L810.9 604.7 L812.2 604.5 L813.5 604.1 L814.8 604.3 L816.2 602.8 L817.5 604.1 L818.8 603.5 L820.0 614.1 L821.3 604.3 L822.9 604.8 L824.6 603.1 L826.2 603.5 L827.4 615.1 L829.0 614.6 L830.5 614.8 L832.0 613.6 L833.6 613.4 L834.9 604.7 L837.3 609.7 L839.8 600.3 L841.2 600.0 L842.7 600.4 L844.1 601.6 L845.6 600.9 L847.0 603.2 L848.5 602.8 L849.8 603.5 L851.1 603.3 L852.4 603.7 L853.7 603.2 L855.0 602.8 L856.3 603.2 L857.6 603.1 L858.9 604.2 L860.2 603.8 L861.5 602.6 L862.8 604.1 L864.1 603.8 L865.4 603.9 L866.7 604.0 L868.0 603.1 L869.3 604.3 L870.6 604.3 L871.9 603.9 L873.2 603.5 L874.5 604.1 L875.8 604.2 L877.2 603.4 L878.5 604.1 L879.8 602.8 L881.1 603.4 L882.4 603.7 L883.8 602.7 L885.1 603.5 L886.4 604.2 L887.7 604.2 L889.0 603.4 L890.4 605.0 L891.7 604.4 L893.0 603.7 L894.3 604.5 L895.6 604.3 L897.0 604.3 L898.3 604.0 L899.6 605.4 L900.9 604.7 L902.2 604.8 L903.6 605.0 L904.9 605.5 L906.2 603.5 L907.5 604.8 L908.8 605.1 L910.2 604.1 L911.5 604.4 L912.8 604.7 L914.5 602.1 L916.1 600.8 L917.8 599.8 L919.1 599.4 L920.5 598.6 L921.8 598.8 L923.1 600.1 L924.5 599.1 L925.8 598.9 L927.1 599.8 L928.4 598.7 L929.8 599.5 L931.1 598.6 L932.4 598.8 L933.8 597.0 L935.1 597.8 L937.0 605.0 L938.8 612.2 L940.2 612.8 L941.7 613.6 L943.1 612.4 L944.6 614.7 L946.0 613.5 L947.5 614.6 L948.9 614.5 L950.2 613.9 L951.6 614.6 L953.0 614.8 L954.3 613.6 L955.7 615.6 L957.1 614.4 L958.4 614.7 L959.8 614.6 L961.1 599.3 L962.6 600.1 L964.2 600.3 L965.8 600.7 L967.3 601.8 L968.7 602.3 L970.0 602.3 L971.4 601.9 L972.8 603.0 L974.1 602.3 L975.5 601.9 L976.9 602.6 L978.2 602.3 L979.6 603.5" fill="none" stroke="#b0321e" stroke-width="2.1" stroke-linejoin="round" stroke-linecap="round"/>
<path d="M435.4 403.4 L437.0 402.0 L438.5 401.7 L440.1 400.4 L441.6 401.6 L443.1 403.6 L444.6 404.5 L446.3 402.7 L448.0 399.8 L449.7 398.3 L451.2 400.4 L452.8 401.4 L454.6 399.2 L456.5 395.9 L457.9 399.3 L459.3 397.4 L460.6 397.1 L462.0 395.2 L463.5 396.0 L465.1 396.9 L466.6 398.4 L468.1 398.7 L469.5 397.2 L470.8 396.4 L472.2 395.2 L473.6 396.1 L475.0 395.9 L476.9 399.8 L478.7 403.1 L480.2 398.9 L481.8 394.6 L483.2 395.9 L484.5 397.9 L485.9 398.7 L487.5 399.3 L489.1 399.2 L490.7 399.3 L492.2 401.6 L493.7 404.8 L495.4 398.0 L496.8 398.1 L498.1 397.9 L499.5 398.0 L501.2 399.3 L503.0 401.4 L504.4 400.4 L505.7 400.4 L507.4 402.3 L509.1 404.1 L510.0 404.1 L511.7 401.8 L513.4 400.4 L515.5 405.5 L517.8 399.3 L519.3 400.9 L520.9 402.7 L522.6 401.2 L524.3 399.3 L525.9 400.8 L527.5 402.2 L529.1 404.1 L530.5 404.7 L531.8 405.0 L533.2 405.9 L534.5 406.1 L535.9 406.5 L538.0 412.3 L540.0 406.2 L541.4 407.7 L542.7 408.5 L544.1 408.9 L545.8 409.5 L547.5 409.6 L549.2 408.6 L551.0 408.2 L552.7 407.9 L554.4 408.5 L556.1 407.3 L557.8 405.1 L559.2 406.4 L560.5 407.1 L561.9 407.9 L563.6 406.7 L565.3 405.8 L567.3 408.2 L568.8 405.4 L570.4 403.1 L572.0 404.5 L573.5 405.5 L575.2 406.4 L576.9 407.2 L578.9 403.4 L580.3 402.9 L581.7 402.1 L582.3 215.0 L583.4 208.8 L584.5 213.0 L586.0 221.0 L588.0 228.0 L589.5 230.8 L591.0 233.5 L592.3 234.5 L593.7 235.5 L595.0 236.5 L596.8 237.2 L598.5 238.0 L600.2 240.3 L602.0 242.0 L603.5 243.4 L605.0 242.7 L606.5 243.6 L608.0 245.0 L609.4 246.6 L610.7 246.8 L612.0 247.1 L613.4 246.5 L614.8 245.5 L616.1 245.7 L617.5 246.5 L618.9 247.0 L620.3 247.7 L621.6 246.6 L623.0 247.8 L624.4 248.1 L625.7 247.1 L627.1 247.3 L628.5 249.1 L629.9 248.9 L631.2 249.3 L632.6 249.2 L634.0 248.0 L635.3 247.4 L636.7 245.8 L638.1 245.3 L639.5 245.4 L640.8 244.8 L642.2 243.0 L644.2 244.3 L646.1 247.8 L647.5 246.1 L649.0 247.2 L650.4 246.0 L651.8 245.0 L653.2 245.2 L654.7 243.3 L656.1 243.3 L657.6 243.0 L659.5 248.8 L660.9 247.2 L662.4 247.7 L663.8 245.6 L665.2 245.3 L666.7 245.3 L668.1 242.6 L669.6 242.2 L671.0 241.1 L672.4 241.5 L673.7 241.7 L675.1 240.1 L676.5 239.7 L677.9 238.7 L679.2 240.4 L680.6 239.2 L682.6 244.0 L684.1 242.1 L685.6 241.4 L687.2 241.8 L688.7 240.8 L690.2 240.1 L691.7 240.4 L693.3 239.2 L694.8 240.3 L696.4 238.3 L697.9 239.2 L699.9 418.8 L701.8 418.8 L703.2 416.4 L704.6 414.0 L706.1 411.6 L707.5 409.2 L709.5 403.4 L711.1 402.8 L712.7 402.1 L714.3 401.5 L715.2 410.1 L716.7 410.1 L718.1 410.1 L719.0 215.2 L721.5 216.0 L723.9 221.9 L724.8 397.6 L726.7 390.9 L728.1 390.2 L729.5 391.3 L730.9 389.8 L732.2 390.4 L733.6 391.5 L735.0 390.9 L736.3 391.0 L737.6 389.6 L738.9 388.9 L740.2 389.1 L741.5 389.1 L742.9 389.8 L744.4 389.0 L745.8 388.4 L747.2 390.1 L748.7 389.8 L750.1 390.9 L751.6 391.0 L753.0 390.0 L754.5 391.1 L755.9 389.8 L757.4 390.8 L758.8 389.5 L760.2 389.5 L761.7 389.7 L763.1 391.1 L764.6 390.0 L766.5 406.4 L767.9 407.5 L769.4 406.0 L770.8 406.4 L772.2 406.5 L773.7 406.6 L775.1 406.8 L776.6 406.9 L778.0 407.3 L779.4 406.5 L780.7 407.5 L782.0 408.1 L783.4 407.4 L784.8 408.2 L786.1 407.5 L787.5 406.5 L788.8 408.0 L790.1 408.3 L791.5 407.3 L793.0 406.2 L794.6 404.9 L796.1 405.7 L797.7 405.2 L799.2 404.5 L801.1 318.0 L802.5 318.2 L804.0 318.0 L804.0 381.4 L806.5 368.9 L808.8 392.9 L810.7 400.6 L812.6 408.3 L813.9 409.1 L815.3 407.9 L816.6 408.0 L818.0 405.6 L819.3 406.5 L820.6 406.8 L822.0 404.6 L823.3 404.2 L824.7 405.5 L826.0 404.5 L827.5 405.1 L829.1 402.6 L830.6 403.6 L832.2 402.0 L833.7 402.5 L835.2 403.4 L836.6 403.4 L838.0 402.6 L839.5 402.8 L841.0 404.4 L842.4 404.1 L843.8 404.9 L845.3 404.5 L846.7 404.2 L848.0 403.9 L849.4 405.5 L850.8 404.7 L852.2 404.1 L853.5 404.2 L854.9 404.6 L856.3 404.5 L857.6 404.9 L859.0 403.6 L860.4 404.6 L861.8 404.1 L863.1 404.5 L864.5 403.5 L865.9 405.1 L867.2 406.0 L868.6 407.0 L870.0 408.0 L871.4 408.0 L872.7 408.5 L874.1 409.3 L875.4 409.8 L876.8 409.9 L878.1 408.8 L879.4 408.8 L880.7 408.0 L882.0 409.4 L883.4 410.0 L884.7 408.3 L886.0 407.7 L887.4 407.7 L888.7 408.2 L890.0 408.3 L891.4 407.6 L892.8 409.2 L894.2 406.7 L895.6 407.1 L897.0 406.5 L898.4 407.3 L899.8 407.8 L901.2 408.2 L902.6 406.8 L904.0 406.6 L905.3 407.7 L906.7 408.2 L908.1 409.1 L909.5 407.0 L910.9 408.3 L912.8 392.9 L914.7 411.2 L916.0 409.1 L917.4 408.2 L918.7 407.2 L920.0 406.2 L921.3 406.3 L922.6 404.9 L924.0 402.9 L925.3 402.5 L926.7 401.7 L928.2 401.9 L929.6 401.6 L931.0 403.2 L932.5 402.0 L933.9 402.6 L935.4 403.3 L936.8 402.5 L938.2 402.8 L939.7 402.6 L941.1 404.6 L942.6 405.0 L944.0 403.9 L945.5 404.8 L946.9 406.2 L948.4 405.4 L949.7 404.7 L951.1 403.3 L952.4 402.2 L953.8 403.9 L955.1 402.8 L956.4 401.1 L957.8 400.8 L959.1 400.1 L960.5 398.8 L961.8 398.7 L963.1 400.4 L964.5 399.9 L965.8 399.2 L967.2 398.9 L968.5 400.5 L969.8 400.6 L971.2 402.1 L972.5 402.3 L973.9 402.4 L975.2 402.5 L976.7 400.4 L978.1 399.2 L979.5 398.4 L981.0 397.7" fill="none" stroke="#6c8c22" stroke-width="2.1" stroke-linejoin="round" stroke-linecap="round"/>
<path d="M434.8 422.5 L436.1 422.3 L437.5 422.6 L438.8 422.3 L440.2 422.4 L441.5 422.5 L442.9 422.0 L444.2 422.1 L445.6 421.8 L446.9 422.1 L448.2 421.6 L449.6 422.1 L450.9 422.0 L452.3 421.9 L453.6 421.4 L455.0 421.4 L456.3 421.7 L457.6 421.2 L459.0 421.4 L460.3 421.3 L461.7 421.6 L463.0 421.3 L464.4 421.4 L465.7 421.0 L467.1 421.3 L468.4 421.0 L469.8 421.0 L471.1 421.5 L472.5 421.0 L473.9 421.7 L475.3 421.3 L476.6 421.7 L478.0 421.8 L479.4 421.6 L480.7 422.2 L482.1 421.9 L483.5 422.0 L484.9 422.0 L486.2 422.3 L487.6 422.5 L488.9 422.5 L490.2 422.8 L491.5 422.6 L492.8 422.9 L494.1 422.6 L495.5 422.9 L496.8 423.0 L498.1 423.4 L499.4 423.4 L500.7 423.3 L502.0 423.0 L503.3 423.3 L504.6 423.6 L505.9 423.3 L507.2 423.6 L508.5 423.6 L509.9 423.4 L511.2 424.2 L512.5 424.1 L513.8 423.7 L515.1 424.1 L516.4 424.1 L517.8 424.0 L519.1 424.1 L520.5 424.2 L521.9 424.1 L523.3 424.1 L524.6 424.2 L526.0 424.4 L527.4 424.2 L528.7 424.1 L530.1 424.5 L531.5 424.3 L532.9 424.8 L534.2 424.5 L535.6 424.5 L537.0 424.5 L538.4 424.2 L539.7 424.4 L541.1 423.8 L542.5 423.7 L543.9 423.5 L545.2 423.8 L546.6 423.7 L548.0 423.2 L549.4 423.3 L550.8 423.5 L552.1 423.2 L553.5 422.7 L554.9 422.9 L556.2 422.7 L557.6 422.6 L558.9 422.5 L560.3 422.7 L561.6 422.4 L562.9 423.0 L564.3 422.6 L565.6 422.6 L567.0 422.7 L568.3 422.7 L569.6 422.7 L571.0 422.4 L572.3 422.3 L573.7 422.3 L575.0 422.0 L576.3 422.3 L577.7 422.4 L579.0 422.6 L580.4 422.4 L581.7 422.2 L583.7 423.9 L585.6 425.4 L587.0 425.9 L588.4 425.9 L589.7 426.6 L591.1 427.0 L592.5 427.7 L593.9 427.7 L595.2 428.3 L596.6 428.9 L598.0 429.3 L599.3 429.7 L600.6 429.9 L601.9 430.0 L603.3 429.9 L604.6 430.5 L605.9 430.8 L607.2 430.8 L608.5 430.8 L609.8 431.1 L611.2 431.1 L612.5 431.7 L613.8 432.1 L615.1 432.0 L616.4 432.3 L617.7 432.6 L619.1 432.4 L620.4 433.1 L621.7 433.1 L623.0 433.2 L624.3 433.1 L625.7 433.1 L627.0 433.3 L628.3 433.7 L629.7 433.9 L631.0 433.7 L632.3 434.3 L633.6 434.0 L635.0 434.1 L636.3 434.0 L637.6 434.7 L639.0 434.2 L640.3 434.9 L641.6 434.7 L643.0 434.9 L644.3 435.0 L645.6 434.9 L647.0 435.4 L648.3 435.6 L649.6 435.6 L650.9 435.5 L652.3 435.3 L653.6 435.9 L654.9 435.6 L656.3 436.2 L657.6 436.0 L658.9 435.5 L660.3 435.5 L661.6 435.4 L663.0 434.7 L664.3 434.6 L665.6 434.0 L667.0 433.7 L668.3 433.5 L669.7 433.8 L671.0 433.2 L672.3 433.3 L673.7 432.9 L675.0 432.5 L676.4 432.5 L677.7 432.4 L679.1 431.9 L680.4 431.9 L681.8 431.9 L683.1 431.1 L684.5 431.0 L685.8 431.0 L687.1 430.6 L688.5 430.6 L689.8 430.5 L691.2 430.0 L692.5 430.1 L693.9 429.7 L695.2 429.7 L696.6 429.4 L697.9 429.3 L699.4 428.7 L700.8 427.6 L702.2 427.3 L703.7 426.2 L705.1 426.1 L706.6 425.1 L708.0 424.3 L709.5 423.6 L710.9 423.5 L712.4 423.7 L713.8 423.7 L715.2 423.8 L716.7 423.8 L718.1 423.6 L719.7 425.3 L721.3 427.3 L722.9 428.7 L724.8 427.8 L726.7 426.4 L728.1 426.6 L729.5 426.2 L730.9 426.2 L732.2 426.2 L733.6 426.4 L735.0 426.1 L736.3 426.2 L737.7 426.2 L739.0 426.2 L740.4 426.6 L741.7 426.3 L743.1 426.2 L744.4 426.7 L745.7 426.9 L747.1 426.8 L748.4 426.8 L749.8 427.0 L751.1 426.7 L752.5 427.0 L753.8 426.7 L755.1 426.8 L756.5 427.0 L757.8 427.1 L759.2 427.1 L760.5 427.0 L761.8 427.5 L763.2 427.4 L764.5 427.3 L765.9 427.4 L767.2 427.5 L768.6 427.5 L769.9 427.7 L771.3 427.3 L772.6 427.8 L774.0 427.7 L775.3 427.4 L776.7 427.4 L778.0 427.0 L779.4 427.1 L780.7 426.6 L782.1 426.9 L783.4 426.6 L784.8 426.7 L786.1 426.1 L787.5 426.4 L788.8 425.9 L790.2 426.0 L791.5 426.2 L792.9 425.4 L794.2 425.5 L795.6 425.4 L796.9 425.3 L798.3 425.0 L799.6 425.5 L801.0 425.1 L802.3 425.2 L803.7 424.8 L805.0 424.7 L806.3 424.8 L807.6 424.3 L809.0 424.2 L810.3 424.7 L811.6 424.2 L813.0 424.2 L814.3 424.4 L815.6 424.4 L817.0 423.9 L818.3 423.6 L819.6 423.6 L821.0 423.9 L822.3 423.8 L823.6 423.2 L824.9 423.6 L826.3 423.2 L827.6 423.1 L828.9 422.8 L830.3 423.2 L831.6 423.2 L832.9 422.6 L834.2 422.8 L835.6 422.4 L836.9 422.8 L838.2 422.1 L839.6 422.0 L840.9 422.2 L842.2 422.4 L843.5 422.2 L844.8 422.7 L846.1 422.8 L847.4 422.7 L848.7 422.4 L850.0 422.9 L851.3 423.1 L852.7 422.8 L854.0 422.7 L855.3 422.8 L856.6 423.0 L857.9 423.3 L859.2 423.0 L860.5 423.1 L861.8 423.2 L863.1 423.6 L864.4 423.7 L865.7 423.5 L867.0 423.8 L868.3 424.0 L869.6 423.9 L870.9 423.7 L872.2 423.8 L873.5 424.4 L874.9 424.3 L876.2 424.1 L877.5 424.4 L878.8 424.1 L880.1 424.8 L881.4 424.5 L882.7 424.6 L884.0 424.7 L885.3 424.4 L886.6 424.9 L887.9 424.7 L889.2 424.8 L890.5 425.2 L891.8 424.8 L893.1 425.0 L894.4 425.4 L895.7 425.2 L897.1 425.2 L898.4 425.5 L899.7 425.3 L901.0 425.9 L902.3 426.0 L903.6 425.4 L904.9 425.8 L906.2 426.1 L907.5 426.0 L908.8 425.8 L910.2 426.0 L911.5 425.5 L912.8 425.1 L914.1 425.2 L915.5 425.1 L916.8 424.8 L918.1 424.8 L919.5 424.7 L920.8 424.4 L922.1 424.2 L923.5 424.3 L924.8 424.0 L926.1 423.7 L927.5 423.9 L928.8 423.2 L930.1 423.4 L931.4 422.8 L932.8 423.0 L934.1 422.5 L935.4 422.5 L936.8 422.6 L938.1 422.4 L939.4 422.3 L940.8 421.7 L942.1 421.7 L943.4 421.4 L944.7 421.5 L946.1 421.3 L947.4 421.1 L948.7 420.9 L950.1 421.3 L951.4 421.5 L952.8 421.5 L954.1 421.7 L955.5 421.3 L956.8 421.4 L958.2 421.4 L959.5 421.8 L960.8 421.8 L962.2 421.9 L963.5 421.8 L964.9 422.3 L966.2 421.9 L967.6 422.5 L968.9 422.4 L970.2 422.4 L971.6 422.7 L972.9 422.4 L974.3 422.4 L975.6 422.6 L977.0 422.5 L978.3 422.7 L979.7 423.0 L981.0 423.0" fill="none" stroke="#2e8f40" stroke-width="2.1" stroke-linejoin="round" stroke-linecap="round"/>
<path d="M435.4 415.7 L436.8 415.5 L438.1 414.9 L439.5 415.0 L440.8 414.2 L442.2 414.4 L443.6 415.0 L444.9 414.5 L446.3 414.9 L447.6 415.0 L449.0 415.7 L450.6 416.7 L452.2 417.7 L453.8 418.1 L455.3 418.4 L456.8 417.5 L458.3 417.8 L459.8 417.7 L461.3 417.8 L462.7 417.3 L464.0 418.1 L465.4 416.9 L466.8 417.3 L468.1 417.5 L469.5 417.1 L470.9 418.2 L472.2 417.7 L473.6 418.5 L475.0 419.1 L476.6 419.9 L478.1 419.5 L479.7 420.5 L481.4 419.1 L483.1 418.4 L484.6 419.0 L486.1 418.2 L487.6 418.6 L489.0 418.6 L490.5 418.9 L492.0 419.1 L493.6 417.5 L495.2 416.3 L496.8 415.7 L498.2 416.5 L499.5 416.4 L500.9 416.6 L502.2 416.2 L503.6 416.5 L505.0 417.0 L506.3 416.9 L507.7 417.4 L510.0 415.7 L511.6 415.9 L513.2 416.7 L514.8 416.4 L516.5 415.0 L518.2 414.0 L519.5 414.5 L520.9 415.4 L522.5 415.3 L524.1 414.1 L525.7 413.3 L527.3 413.3 L528.9 414.3 L530.5 415.0 L531.9 414.3 L533.2 412.7 L534.6 412.3 L536.0 412.7 L537.3 413.7 L538.7 414.0 L540.3 414.6 L541.8 414.4 L543.4 414.4 L544.8 414.3 L546.1 413.2 L547.5 412.6 L549.1 412.1 L550.7 412.3 L552.3 411.6 L553.7 412.3 L555.0 413.6 L556.4 413.8 L557.8 415.0 L559.1 413.8 L560.5 413.0 L561.9 413.5 L563.2 414.8 L564.6 415.1 L566.0 416.4 L567.4 415.8 L568.7 415.7 L570.1 415.8 L571.4 415.4 L572.8 415.4 L574.1 416.2 L575.5 417.1 L577.0 417.4 L578.4 416.8 L579.8 416.8 L581.3 416.1 L582.5 405.0 L583.2 392.0 L584.2 383.0 L585.5 377.0 L588.0 372.0 L589.3 370.5 L590.7 369.0 L592.0 367.5 L593.7 366.0 L595.3 364.5 L597.0 363.0 L598.4 362.2 L599.8 361.3 L601.2 360.5 L602.6 359.6 L604.0 358.8 L605.5 358.3 L607.0 357.7 L608.5 357.2 L610.0 356.7 L611.5 356.1 L613.0 355.6 L614.4 355.2 L615.9 354.9 L617.3 354.5 L618.7 354.2 L620.1 353.8 L621.6 353.5 L623.0 353.1 L624.3 352.9 L625.6 352.7 L626.9 352.5 L628.2 352.2 L629.5 352.0 L630.8 351.8 L632.2 351.6 L633.5 351.4 L634.8 351.2 L636.1 350.9 L637.4 350.7 L638.7 350.5 L640.0 350.3 L641.4 350.1 L642.7 349.9 L644.1 349.7 L645.4 349.5 L646.8 349.3 L648.1 349.1 L649.5 348.9 L650.8 348.7 L652.2 348.5 L653.5 348.3 L654.9 348.1 L656.2 347.9 L657.6 347.7 L659.0 348.2 L660.3 348.6 L661.7 349.1 L663.0 349.5 L664.4 350.0 L665.7 350.4 L667.1 350.9 L668.4 351.3 L669.8 351.8 L671.1 352.2 L672.5 352.7 L673.8 353.1 L675.2 353.6 L676.5 354.0 L677.9 354.5 L679.2 354.9 L680.6 355.4 L681.9 355.7 L683.3 356.0 L684.6 356.3 L685.9 356.6 L687.3 356.9 L688.6 357.2 L689.9 357.4 L691.2 357.7 L692.6 358.0 L693.9 358.3 L695.2 358.6 L696.6 358.9 L697.9 359.2 L699.3 366.9 L700.8 374.6 L702.4 381.0 L704.0 387.4 L705.6 393.8 L707.0 396.0 L708.3 398.2 L709.7 400.4 L711.1 402.6 L712.5 404.8 L713.8 407.0 L715.2 409.2 L716.7 409.6 L718.1 410.1 L720.0 391.9 L721.9 373.6 L723.3 387.6 L724.8 401.5 L726.1 402.5 L727.4 402.9 L728.7 404.2 L730.0 405.4 L731.7 405.1 L733.3 407.0 L735.0 407.2 L736.5 407.5 L738.0 407.9 L739.5 408.0 L740.9 408.8 L742.4 409.6 L743.9 410.4 L745.4 411.2 L746.8 412.1 L748.1 411.7 L749.5 410.9 L750.8 411.1 L752.2 410.8 L753.5 412.4 L754.9 411.3 L756.2 412.2 L757.6 412.1 L758.9 412.5 L760.3 410.8 L761.6 411.5 L763.0 411.7 L764.3 411.1 L765.7 412.8 L767.0 411.7 L768.4 412.1 L769.7 412.7 L771.1 412.2 L772.4 411.3 L773.8 412.1 L775.1 411.8 L776.4 411.4 L777.8 411.7 L779.1 412.6 L780.5 411.6 L781.8 412.2 L783.1 412.4 L784.5 412.7 L785.8 411.9 L787.1 413.1 L788.5 412.3 L789.8 413.2 L791.2 413.2 L792.5 412.2 L793.8 412.3 L795.2 412.5 L796.5 413.4 L797.9 412.9 L799.2 413.1 L800.9 405.9 L802.6 398.7 L804.0 401.3 L805.4 405.2 L806.8 407.3 L808.2 407.0 L809.5 407.5 L810.9 407.8 L812.3 407.9 L813.7 407.8 L815.0 408.1 L816.4 409.3 L817.8 409.8 L819.1 410.0 L820.4 410.8 L821.8 411.4 L823.1 410.3 L824.5 411.3 L825.9 412.1 L827.2 411.0 L828.5 412.2 L829.9 412.1 L831.3 412.0 L832.8 412.1 L834.2 411.4 L835.6 410.2 L837.0 410.6 L838.4 412.4 L839.8 412.3 L841.1 413.9 L842.5 414.8 L843.9 415.1 L845.3 416.9 L846.7 416.3 L848.0 415.9 L849.4 415.9 L850.7 415.1 L852.1 414.5 L853.4 414.7 L854.8 414.5 L856.1 413.6 L857.5 414.2 L858.8 413.0 L860.2 412.4 L861.5 412.6 L862.9 412.4 L864.2 411.5 L865.6 412.0 L866.9 411.9 L868.3 411.2 L869.7 411.2 L871.1 411.3 L872.6 409.8 L874.0 410.4 L875.4 410.2 L876.8 409.4 L878.3 409.9 L879.7 409.1 L881.1 409.8 L882.6 410.1 L884.0 410.5 L885.5 410.6 L886.9 410.6 L888.4 410.7 L889.8 410.6 L891.2 411.5 L892.7 412.1 L894.1 412.7 L895.5 411.9 L896.9 411.1 L898.3 411.7 L899.7 410.6 L901.0 411.0 L902.4 411.1 L903.8 411.6 L905.2 410.3 L906.6 410.5 L908.0 410.2 L909.5 411.1 L911.1 410.7 L912.6 410.5 L914.2 410.4 L915.7 410.2 L917.1 410.7 L918.6 411.5 L920.0 411.9 L921.5 413.8 L922.9 414.6 L924.3 414.3 L925.8 416.1 L927.2 416.0 L928.6 414.9 L929.9 414.9 L931.3 415.4 L932.7 414.8 L934.1 414.7 L935.4 415.7 L936.8 413.8 L938.2 413.7 L939.5 413.6 L940.9 414.3 L942.3 413.2 L943.7 412.5 L945.0 413.4 L946.4 413.1 L947.8 413.3 L949.2 413.5 L950.6 414.4 L952.0 415.1 L953.4 415.4 L954.8 416.0 L956.2 416.3 L957.6 417.3 L959.0 418.0 L960.4 417.1 L961.8 417.9 L963.2 417.5 L964.5 418.5 L965.9 417.2 L967.3 417.9 L968.7 417.8 L970.0 417.6 L971.4 418.1 L972.8 417.7 L974.1 416.3 L975.5 417.1 L976.9 416.7 L978.3 416.7 L979.6 416.2 L981.0 416.4" fill="none" stroke="#52358a" stroke-width="2.1" stroke-linejoin="round" stroke-linecap="round"/>
</g>
<rect x="433" y="99" width="550" height="1" fill="#333"/>
<rect x="433" y="629" width="550" height="2" fill="#000"/>
<path d="M438.40 631V635 M499.92 631V635 M561.45 631V635 M622.97 631V635 M684.50 631V635 M746.02 631V635 M807.55 631V635 M869.08 631V635 M930.60 631V635" stroke="#222" stroke-width="1.3"/>
<text x="499.9" y="646" font-size="11" font-weight="bold" fill="#111" text-anchor="middle" textLength="30.5" lengthAdjust="spacingAndGlyphs">00:00</text>
<text x="499.9" y="659" font-size="11" font-weight="bold" fill="#111" text-anchor="middle" textLength="60.5" lengthAdjust="spacingAndGlyphs">2013-08-07</text>
<text x="623.0" y="646" font-size="11" font-weight="bold" fill="#111" text-anchor="middle" textLength="30.5" lengthAdjust="spacingAndGlyphs">00:00</text>
<text x="623.0" y="659" font-size="11" font-weight="bold" fill="#111" text-anchor="middle" textLength="60.5" lengthAdjust="spacingAndGlyphs">2013-08-08</text>
<text x="746.0" y="646" font-size="11" font-weight="bold" fill="#111" text-anchor="middle" textLength="30.5" lengthAdjust="spacingAndGlyphs">00:00</text>
<text x="746.0" y="659" font-size="11" font-weight="bold" fill="#111" text-anchor="middle" textLength="60.5" lengthAdjust="spacingAndGlyphs">2013-08-09</text>
<text x="869.1" y="646" font-size="11" font-weight="bold" fill="#111" text-anchor="middle" textLength="30.5" lengthAdjust="spacingAndGlyphs">00:00</text>
<text x="869.1" y="659" font-size="11" font-weight="bold" fill="#111" text-anchor="middle" textLength="60.5" lengthAdjust="spacingAndGlyphs">2013-08-10</text>
<rect x="325" y="99" width="2" height="531" fill="#1e8030"/>
<path d="M321 99.80H325 M321 135.31H325 M321 170.73H325 M321 206.14H325 M321 241.55H325 M321 276.97H325 M321 312.38H325 M321 347.79H325 M321 383.21H325 M321 418.62H325 M321 454.03H325 M321 489.45H325 M321 524.86H325 M321 560.27H325 M321 595.69H325 M321 630.30H325" stroke="#1e8030" stroke-width="1.2"/>
<text x="319.7" y="104.4" font-size="11.5" fill="#2a8a3c" text-anchor="end" textLength="19.0" lengthAdjust="spacingAndGlyphs">150</text>
<text x="319.7" y="139.9" font-size="11.5" fill="#2a8a3c" text-anchor="end" textLength="19.0" lengthAdjust="spacingAndGlyphs">140</text>
<text x="319.7" y="175.3" font-size="11.5" fill="#2a8a3c" text-anchor="end" textLength="19.0" lengthAdjust="spacingAndGlyphs">130</text>
<text x="319.7" y="210.7" font-size="11.5" fill="#2a8a3c" text-anchor="end" textLength="19.0" lengthAdjust="spacingAndGlyphs">120</text>
<text x="319.7" y="246.2" font-size="11.5" fill="#2a8a3c" text-anchor="end" textLength="19.0" lengthAdjust="spacingAndGlyphs">110</text>
<text x="319.7" y="281.6" font-size="11.5" fill="#2a8a3c" text-anchor="end" textLength="19.0" lengthAdjust="spacingAndGlyphs">100</text>
<text x="319.7" y="317.0" font-size="11.5" fill="#2a8a3c" text-anchor="end" textLength="12.8" lengthAdjust="spacingAndGlyphs">90</text>
<text x="319.7" y="352.4" font-size="11.5" fill="#2a8a3c" text-anchor="end" textLength="12.8" lengthAdjust="spacingAndGlyphs">80</text>
<text x="319.7" y="387.8" font-size="11.5" fill="#2a8a3c" text-anchor="end" textLength="12.8" lengthAdjust="spacingAndGlyphs">70</text>
<text x="319.7" y="423.2" font-size="11.5" fill="#2a8a3c" text-anchor="end" textLength="12.8" lengthAdjust="spacingAndGlyphs">60</text>
<text x="319.7" y="458.6" font-size="11.5" fill="#2a8a3c" text-anchor="end" textLength="12.8" lengthAdjust="spacingAndGlyphs">50</text>
<text x="319.7" y="494.0" font-size="11.5" fill="#2a8a3c" text-anchor="end" textLength="12.8" lengthAdjust="spacingAndGlyphs">40</text>
<text x="319.7" y="529.5" font-size="11.5" fill="#2a8a3c" text-anchor="end" textLength="12.8" lengthAdjust="spacingAndGlyphs">30</text>
<text x="319.7" y="564.9" font-size="11.5" fill="#2a8a3c" text-anchor="end" textLength="12.8" lengthAdjust="spacingAndGlyphs">20</text>
<text x="319.7" y="600.3" font-size="11.5" fill="#2a8a3c" text-anchor="end" textLength="12.8" lengthAdjust="spacingAndGlyphs">10</text>
<text x="319.7" y="634.9" font-size="11.5" fill="#2a8a3c" text-anchor="end" textLength="6.5" lengthAdjust="spacingAndGlyphs">0</text>
<rect x="379" y="99" width="2" height="531" fill="#ac1e06"/>
<path d="M375 99.80H379 M375 126.46H379 M375 153.02H379 M375 179.58H379 M375 206.14H379 M375 232.70H379 M375 259.26H379 M375 285.82H379 M375 312.38H379 M375 338.94H379 M375 365.50H379 M375 392.06H379 M375 418.62H379 M375 445.18H379 M375 471.74H379 M375 498.30H379 M375 524.86H379 M375 551.42H379 M375 577.98H379 M375 604.54H379 M375 630.30H379" stroke="#ac1e06" stroke-width="1.2"/>
<text x="373.5" y="104.4" font-size="11.5" fill="#b83424" text-anchor="end" textLength="12.8" lengthAdjust="spacingAndGlyphs">20</text>
<text x="373.5" y="131.1" font-size="11.5" fill="#b83424" text-anchor="end" textLength="12.8" lengthAdjust="spacingAndGlyphs">19</text>
<text x="373.5" y="157.6" font-size="11.5" fill="#b83424" text-anchor="end" textLength="12.8" lengthAdjust="spacingAndGlyphs">18</text>
<text x="373.5" y="184.2" font-size="11.5" fill="#b83424" text-anchor="end" textLength="12.8" lengthAdjust="spacingAndGlyphs">17</text>
<text x="373.5" y="210.7" font-size="11.5" fill="#b83424" text-anchor="end" textLength="12.8" lengthAdjust="spacingAndGlyphs">16</text>
<text x="373.5" y="237.3" font-size="11.5" fill="#b83424" text-anchor="end" textLength="12.8" lengthAdjust="spacingAndGlyphs">15</text>
<text x="373.5" y="263.9" font-size="11.5" fill="#b83424" text-anchor="end" textLength="12.8" lengthAdjust="spacingAndGlyphs">14</text>
<text x="373.5" y="290.4" font-size="11.5" fill="#b83424" text-anchor="end" textLength="12.8" lengthAdjust="spacingAndGlyphs">13</text>
<text x="373.5" y="317.0" font-size="11.5" fill="#b83424" text-anchor="end" textLength="12.8" lengthAdjust="spacingAndGlyphs">12</text>
<text x="373.5" y="343.5" font-size="11.5" fill="#b83424" text-anchor="end" textLength="12.8" lengthAdjust="spacingAndGlyphs">11</text>
<text x="373.5" y="370.1" font-size="11.5" fill="#b83424" text-anchor="end" textLength="12.8" lengthAdjust="spacingAndGlyphs">10</text>
<text x="373.5" y="396.7" font-size="11.5" fill="#b83424" text-anchor="end" textLength="6.5" lengthAdjust="spacingAndGlyphs">9</text>
<text x="373.5" y="423.2" font-size="11.5" fill="#b83424" text-anchor="end" textLength="6.5" lengthAdjust="spacingAndGlyphs">8</text>
<text x="373.5" y="449.8" font-size="11.5" fill="#b83424" text-anchor="end" textLength="6.5" lengthAdjust="spacingAndGlyphs">7</text>
<text x="373.5" y="476.3" font-size="11.5" fill="#b83424" text-anchor="end" textLength="6.5" lengthAdjust="spacingAndGlyphs">6</text>
<text x="373.5" y="502.9" font-size="11.5" fill="#b83424" text-anchor="end" textLength="6.5" lengthAdjust="spacingAndGlyphs">5</text>
<text x="373.5" y="529.5" font-size="11.5" fill="#b83424" text-anchor="end" textLength="6.5" lengthAdjust="spacingAndGlyphs">4</text>
<text x="373.5" y="556.0" font-size="11.5" fill="#b83424" text-anchor="end" textLength="6.5" lengthAdjust="spacingAndGlyphs">3</text>
<text x="373.5" y="582.6" font-size="11.5" fill="#b83424" text-anchor="end" textLength="6.5" lengthAdjust="spacingAndGlyphs">2</text>
<text x="373.5" y="609.1" font-size="11.5" fill="#b83424" text-anchor="end" textLength="6.5" lengthAdjust="spacingAndGlyphs">1</text>
<text x="373.5" y="634.9" font-size="11.5" fill="#b83424" text-anchor="end" textLength="6.5" lengthAdjust="spacingAndGlyphs">0</text>
<rect x="433" y="99" width="2" height="531" fill="#0f2f8c"/>
<path d="M429 99.80H433 M429 126.46H433 M429 153.02H433 M429 179.58H433 M429 206.14H433 M429 232.70H433 M429 259.26H433 M429 285.82H433 M429 312.38H433 M429 338.94H433 M429 365.50H433 M429 392.06H433 M429 418.62H433 M429 445.18H433 M429 471.74H433 M429 498.30H433 M429 524.86H433 M429 551.42H433 M429 577.98H433 M429 604.54H433 M429 630.30H433" stroke="#0f2f8c" stroke-width="1.2"/>
<text x="427.8" y="104.4" font-size="11.5" fill="#2444a0" text-anchor="end" textLength="19.0" lengthAdjust="spacingAndGlyphs">200</text>
<text x="427.8" y="131.1" font-size="11.5" fill="#2444a0" text-anchor="end" textLength="19.0" lengthAdjust="spacingAndGlyphs">190</text>
<text x="427.8" y="157.6" font-size="11.5" fill="#2444a0" text-anchor="end" textLength="19.0" lengthAdjust="spacingAndGlyphs">180</text>
<text x="427.8" y="184.2" font-size="11.5" fill="#2444a0" text-anchor="end" textLength="19.0" lengthAdjust="spacingAndGlyphs">170</text>
<text x="427.8" y="210.7" font-size="11.5" fill="#2444a0" text-anchor="end" textLength="19.0" lengthAdjust="spacingAndGlyphs">160</text>
<text x="427.8" y="237.3" font-size="11.5" fill="#2444a0" text-anchor="end" textLength="19.0" lengthAdjust="spacingAndGlyphs">150</text>
<text x="427.8" y="263.9" font-size="11.5" fill="#2444a0" text-anchor="end" textLength="19.0" lengthAdjust="spacingAndGlyphs">140</text>
<text x="427.8" y="290.4" font-size="11.5" fill="#2444a0" text-anchor="end" textLength="19.0" lengthAdjust="spacingAndGlyphs">130</text>
<text x="427.8" y="317.0" font-size="11.5" fill="#2444a0" text-anchor="end" textLength="19.0" lengthAdjust="spacingAndGlyphs">120</text>
<text x="427.8" y="343.5" font-size="11.5" fill="#2444a0" text-anchor="end" textLength="19.0" lengthAdjust="spacingAndGlyphs">110</text>
<text x="427.8" y="370.1" font-size="11.5" fill="#2444a0" text-anchor="end" textLength="19.0" lengthAdjust="spacingAndGlyphs">100</text>
<text x="427.8" y="396.7" font-size="11.5" fill="#2444a0" text-anchor="end" textLength="12.8" lengthAdjust="spacingAndGlyphs">90</text>
<text x="427.8" y="423.2" font-size="11.5" fill="#2444a0" text-anchor="end" textLength="12.8" lengthAdjust="spacingAndGlyphs">80</text>
<text x="427.8" y="449.8" font-size="11.5" fill="#2444a0" text-anchor="end" textLength="12.8" lengthAdjust="spacingAndGlyphs">70</text>
<text x="427.8" y="476.3" font-size="11.5" fill="#2444a0" text-anchor="end" textLength="12.8" lengthAdjust="spacingAndGlyphs">60</text>
<text x="427.8" y="502.9" font-size="11.5" fill="#2444a0" text-anchor="end" textLength="12.8" lengthAdjust="spacingAndGlyphs">50</text>
<text x="427.8" y="529.5" font-size="11.5" fill="#2444a0" text-anchor="end" textLength="12.8" lengthAdjust="spacingAndGlyphs">40</text>
<text x="427.8" y="556.0" font-size="11.5" fill="#2444a0" text-anchor="end" textLength="12.8" lengthAdjust="spacingAndGlyphs">30</text>
<text x="427.8" y="582.6" font-size="11.5" fill="#2444a0" text-anchor="end" textLength="12.8" lengthAdjust="spacingAndGlyphs">20</text>
<text x="427.8" y="609.1" font-size="11.5" fill="#2444a0" text-anchor="end" textLength="12.8" lengthAdjust="spacingAndGlyphs">10</text>
<text x="427.8" y="634.9" font-size="11.5" fill="#2444a0" text-anchor="end" textLength="6.5" lengthAdjust="spacingAndGlyphs">0</text>
<text x="307" y="88.5" font-size="12" font-weight="bold" fill="#2f8a3c">°</text>
<text x="314.5" y="88.5" font-size="12" font-weight="bold" fill="#2f8a3c" textLength="9.5" lengthAdjust="spacingAndGlyphs">C</text>
<text x="340.7" y="88.5" font-size="12" font-weight="bold" fill="#b8402c" textLength="38" lengthAdjust="spacingAndGlyphs">mm/s</text>
<text x="415.2" y="88.5" font-size="12" font-weight="bold" fill="#2848a0">°</text>
<text x="422.7" y="88.5" font-size="12" font-weight="bold" fill="#2848a0" textLength="9.5" lengthAdjust="spacingAndGlyphs">C</text>
<rect x="981" y="99" width="2" height="531" fill="#000"/>
<path d="M983 99.80H987 M983 144.17H987 M983 188.33H987 M983 232.50H987 M983 276.67H987 M983 320.83H987 M983 365.00H987 M983 409.17H987 M983 453.33H987 M983 497.50H987 M983 541.67H987 M983 585.83H987 M983 630.30H987" stroke="#000" stroke-width="1.2"/>
<text x="989.3" y="104.4" font-size="11.5" fill="#111" textLength="19.4" lengthAdjust="spacingAndGlyphs">600</text>
<text x="989.3" y="148.8" font-size="11.5" fill="#111" textLength="19.4" lengthAdjust="spacingAndGlyphs">550</text>
<text x="989.3" y="192.9" font-size="11.5" fill="#111" textLength="19.4" lengthAdjust="spacingAndGlyphs">500</text>
<text x="989.3" y="237.1" font-size="11.5" fill="#111" textLength="19.4" lengthAdjust="spacingAndGlyphs">450</text>
<text x="989.3" y="281.3" font-size="11.5" fill="#111" textLength="19.4" lengthAdjust="spacingAndGlyphs">400</text>
<text x="989.3" y="325.4" font-size="11.5" fill="#111" textLength="19.4" lengthAdjust="spacingAndGlyphs">350</text>
<text x="989.3" y="369.6" font-size="11.5" fill="#111" textLength="19.4" lengthAdjust="spacingAndGlyphs">300</text>
<text x="989.3" y="413.8" font-size="11.5" fill="#111" textLength="19.4" lengthAdjust="spacingAndGlyphs">250</text>
<text x="989.3" y="457.9" font-size="11.5" fill="#111" textLength="19.4" lengthAdjust="spacingAndGlyphs">200</text>
<text x="989.3" y="502.1" font-size="11.5" fill="#111" textLength="19.4" lengthAdjust="spacingAndGlyphs">150</text>
<text x="989.3" y="546.3" font-size="11.5" fill="#111" textLength="19.4" lengthAdjust="spacingAndGlyphs">100</text>
<text x="989.3" y="590.4" font-size="11.5" fill="#111" textLength="13.0" lengthAdjust="spacingAndGlyphs">50</text>
<text x="989.3" y="634.9" font-size="11.5" fill="#111" textLength="6.7" lengthAdjust="spacingAndGlyphs">0</text>
<rect x="1035" y="99" width="2" height="531" fill="#000"/>
<path d="M1037 99.80H1041 M1037 148.19H1041 M1037 196.48H1041 M1037 244.77H1041 M1037 293.06H1041 M1037 341.35H1041 M1037 389.65H1041 M1037 437.94H1041 M1037 486.23H1041 M1037 534.52H1041 M1037 582.81H1041 M1037 630.30H1041" stroke="#000" stroke-width="1.2"/>
<text x="1043.2" y="104.4" font-size="11.5" fill="#111" textLength="6.7" lengthAdjust="spacingAndGlyphs">5</text>
<text x="1043.2" y="152.8" font-size="11.5" fill="#111" textLength="6.7" lengthAdjust="spacingAndGlyphs">0</text>
<text x="1043.2" y="201.1" font-size="11.5" fill="#111" textLength="13.3" lengthAdjust="spacingAndGlyphs">−5</text>
<text x="1043.2" y="249.4" font-size="11.5" fill="#111" textLength="19.7" lengthAdjust="spacingAndGlyphs">−10</text>
<text x="1043.2" y="297.7" font-size="11.5" fill="#111" textLength="19.7" lengthAdjust="spacingAndGlyphs">−15</text>
<text x="1043.2" y="346.0" font-size="11.5" fill="#111" textLength="19.7" lengthAdjust="spacingAndGlyphs">−20</text>
<text x="1043.2" y="394.2" font-size="11.5" fill="#111" textLength="19.7" lengthAdjust="spacingAndGlyphs">−25</text>
<text x="1043.2" y="442.5" font-size="11.5" fill="#111" textLength="19.7" lengthAdjust="spacingAndGlyphs">−30</text>
<text x="1043.2" y="490.8" font-size="11.5" fill="#111" textLength="19.7" lengthAdjust="spacingAndGlyphs">−35</text>
<text x="1043.2" y="539.1" font-size="11.5" fill="#111" textLength="19.7" lengthAdjust="spacingAndGlyphs">−40</text>
<text x="1043.2" y="587.4" font-size="11.5" fill="#111" textLength="19.7" lengthAdjust="spacingAndGlyphs">−45</text>
<text x="1043.2" y="634.9" font-size="11.5" fill="#111" textLength="19.7" lengthAdjust="spacingAndGlyphs">−50</text>
<rect x="1089" y="99" width="2" height="531" fill="#000"/>
<path d="M1091 99.80H1095 M1091 135.31H1095 M1091 170.73H1095 M1091 206.14H1095 M1091 241.55H1095 M1091 276.97H1095 M1091 312.38H1095 M1091 347.79H1095 M1091 383.21H1095 M1091 418.62H1095 M1091 454.03H1095 M1091 489.45H1095 M1091 524.86H1095 M1091 560.27H1095 M1091 595.69H1095 M1091 630.30H1095" stroke="#000" stroke-width="1.2"/>
<text x="1097.9" y="104.4" font-size="11.5" fill="#111" textLength="19.4" lengthAdjust="spacingAndGlyphs">150</text>
<text x="1097.9" y="139.9" font-size="11.5" fill="#111" textLength="19.4" lengthAdjust="spacingAndGlyphs">140</text>
<text x="1097.9" y="175.3" font-size="11.5" fill="#111" textLength="19.4" lengthAdjust="spacingAndGlyphs">130</text>
<text x="1097.9" y="210.7" font-size="11.5" fill="#111" textLength="19.4" lengthAdjust="spacingAndGlyphs">120</text>
<text x="1097.9" y="246.2" font-size="11.5" fill="#111" textLength="19.4" lengthAdjust="spacingAndGlyphs">110</text>
<text x="1097.9" y="281.6" font-size="11.5" fill="#111" textLength="19.4" lengthAdjust="spacingAndGlyphs">100</text>
<text x="1097.9" y="317.0" font-size="11.5" fill="#111" textLength="13.0" lengthAdjust="spacingAndGlyphs">90</text>
<text x="1097.9" y="352.4" font-size="11.5" fill="#111" textLength="13.0" lengthAdjust="spacingAndGlyphs">80</text>
<text x="1097.9" y="387.8" font-size="11.5" fill="#111" textLength="13.0" lengthAdjust="spacingAndGlyphs">70</text>
<text x="1097.9" y="423.2" font-size="11.5" fill="#111" textLength="13.0" lengthAdjust="spacingAndGlyphs">60</text>
<text x="1097.9" y="458.6" font-size="11.5" fill="#111" textLength="13.0" lengthAdjust="spacingAndGlyphs">50</text>
<text x="1097.9" y="494.0" font-size="11.5" fill="#111" textLength="13.0" lengthAdjust="spacingAndGlyphs">40</text>
<text x="1097.9" y="529.5" font-size="11.5" fill="#111" textLength="13.0" lengthAdjust="spacingAndGlyphs">30</text>
<text x="1097.9" y="564.9" font-size="11.5" fill="#111" textLength="13.0" lengthAdjust="spacingAndGlyphs">20</text>
<text x="1097.9" y="600.3" font-size="11.5" fill="#111" textLength="13.0" lengthAdjust="spacingAndGlyphs">10</text>
<text x="1097.9" y="634.9" font-size="11.5" fill="#111" textLength="6.7" lengthAdjust="spacingAndGlyphs">0</text>
<text x="987" y="88.5" font-size="12" font-weight="bold" fill="#111" textLength="21" lengthAdjust="spacingAndGlyphs">kW</text>
<text x="1040" y="88.5" font-size="12" font-weight="bold" fill="#111" textLength="36" lengthAdjust="spacingAndGlyphs">mBar</text>
<text x="1093.3" y="88.5" font-size="12" font-weight="bold" fill="#111" textLength="14.5" lengthAdjust="spacingAndGlyphs">%</text>
<text transform="translate(1125.5,273.2) rotate(90)" font-size="11" fill="#222" textLength="126" lengthAdjust="spacingAndGlyphs">PxTrend / www.pxtrend.de</text>
<rect x="444.5" y="83.9" width="9" height="8" fill="#2c2c94" stroke="#000" stroke-width="1"/>
<text x="458.5" y="92.4" font-size="11.3" font-weight="bold" fill="#111" textLength="83.3" lengthAdjust="spacing">H08-043+IT11</text>
<rect x="564.5" y="83.9" width="9" height="8" fill="#1f6a22" stroke="#000" stroke-width="1"/>
<text x="578.5" y="92.4" font-size="11.3" font-weight="bold" fill="#111" textLength="82.6" lengthAdjust="spacing">H08-043+IJ01</text>
<rect x="684.5" y="83.9" width="9" height="8" fill="#b0321e" stroke="#000" stroke-width="1"/>
<text x="698.5" y="92.4" font-size="11.3" font-weight="bold" fill="#111" textLength="84.1" lengthAdjust="spacing">H08-043+IV01</text>
<rect x="804.5" y="83.9" width="9" height="8" fill="#758f2a" stroke="#000" stroke-width="1"/>
<text x="818.5" y="92.4" font-size="11.3" font-weight="bold" fill="#111" textLength="84.1" lengthAdjust="spacing">H08-043+IP01</text>
<rect x="924.5" y="83.9" width="9" height="8" fill="#2f9a45" stroke="#000" stroke-width="1"/>
<text x="938.5" y="92.4" font-size="11.3" font-weight="bold" fill="#111" textLength="83.3" lengthAdjust="spacing">H08-040+IT03</text>
<rect x="444.5" y="98.2" width="9" height="8" fill="#553a8a" stroke="#000" stroke-width="1"/>
<text x="458.5" y="106.7" font-size="11.3" font-weight="bold" fill="#111" textLength="79.0" lengthAdjust="spacing">H08-043+II01</text>
<rect x="287" y="662" width="852" height="97" fill="#efefef"/>
<rect x="288" y="676" width="14" height="13" fill="#fcfcfc"/>
<rect x="1124" y="676" width="15" height="13" fill="#fcfcfc"/>
<rect x="288" y="690" width="14" height="13" fill="#fcfcfc"/>
<rect x="1124" y="690" width="15" height="13" fill="#fcfcfc"/>
<rect x="288" y="704" width="14" height="13" fill="#fcfcfc"/>
<rect x="1124" y="704" width="15" height="13" fill="#fcfcfc"/>
<rect x="288" y="718" width="14" height="13" fill="#fcfcfc"/>
<rect x="1124" y="718" width="15" height="13" fill="#fcfcfc"/>
<rect x="288" y="732" width="14" height="13" fill="#fcfcfc"/>
<rect x="1124" y="732" width="15" height="13" fill="#fcfcfc"/>
<rect x="288" y="746" width="14" height="13" fill="#fcfcfc"/>
<rect x="1124" y="746" width="15" height="13" fill="#fcfcfc"/>
<path d="M288 663.5H1139 M288 676.5H1139 M288 690.5H1139 M288 704.5H1139 M288 718.5H1139 M288 732.5H1139 M288 746.5H1139 M288.5 662V759 M303.5 662V759 M391.5 662V759 M730.5 662V759 M829.5 662V759 M904.5 662V759 M974.5 662V759 M1049.5 662V759 M1124.5 662V759" stroke="#fff" stroke-width="1"/>
<path d="M287 662.5H1139.5 M287 675.5H1139.5 M287 689.5H1139.5 M287 703.5H1139.5 M287 717.5H1139.5 M287 731.5H1139.5 M287 745.5H1139.5 M287 759.5H1139.5 M287.5 662V759.5 M302.5 662V759.5 M390.5 662V759.5 M729.5 662V759.5 M828.5 662V759.5 M903.5 662V759.5 M973.5 662V759.5 M1048.5 662V759.5 M1123.5 662V759.5 M1139.5 662V759.5" stroke="#222" stroke-width="1" fill="none"/>
<rect x="291" y="677" width="10" height="12" fill="#2c2c94"/>
<rect x="1127.5" y="677" width="10" height="12" fill="#2c2c94"/>
<rect x="291" y="691" width="10" height="12" fill="#1f6a22"/>
<rect x="1127.5" y="691" width="10" height="12" fill="#1f6a22"/>
<rect x="291" y="705" width="10" height="12" fill="#b83a22"/>
<rect x="1127.5" y="705" width="10" height="12" fill="#b83a22"/>
<rect x="291" y="719" width="10" height="12" fill="#738c2c"/>
<rect x="1127.5" y="719" width="10" height="12" fill="#738c2c"/>
<rect x="291" y="733" width="10" height="12" fill="#2f9a4c"/>
<rect x="1127.5" y="733" width="10" height="12" fill="#2f9a4c"/>
<rect x="291" y="747" width="10" height="12" fill="#553a8a"/>
<rect x="1127.5" y="747" width="10" height="12" fill="#553a8a"/>
<text x="346.5" y="673" font-size="11" fill="#111" text-anchor="middle" textLength="53.8" lengthAdjust="spacingAndGlyphs">Trend–Tag</text>
<text x="559.7" y="673" font-size="11" fill="#111" text-anchor="middle" textLength="55.0" lengthAdjust="spacingAndGlyphs">Description</text>
<text x="778.7" y="673" font-size="11" fill="#111" text-anchor="middle" textLength="34.2" lengthAdjust="spacingAndGlyphs">Y–Axis</text>
<text x="865.8" y="673" font-size="11" fill="#111" text-anchor="middle" textLength="17.7" lengthAdjust="spacingAndGlyphs">Min</text>
<text x="938" y="673" font-size="11" fill="#111" text-anchor="middle" textLength="20.8" lengthAdjust="spacingAndGlyphs">Max</text>
<text x="1010.5" y="673" font-size="11" fill="#111" text-anchor="middle" textLength="19.0" lengthAdjust="spacingAndGlyphs">Avg</text>
<text x="1085.8" y="673" font-size="11" fill="#111" text-anchor="middle" textLength="20.8" lengthAdjust="spacingAndGlyphs">Last</text>
<text x="309.5" y="686.8" font-size="11" font-weight="bold" fill="#111" textLength="73.5" lengthAdjust="spacingAndGlyphs">H08-043+IT11</text>
<text x="396.2" y="686.8" font-size="11" font-weight="bold" fill="#111" textLength="320.8" lengthAdjust="spacingAndGlyphs">SEPARATOR FAN MOTOR WDG.TEMP.T11 [0 - 200.0 ° C]</text>
<text x="735.4" y="686.8" font-size="11" font-weight="bold" fill="#111" textLength="74.2" lengthAdjust="spacingAndGlyphs">0 - 200.0 [° C]</text>
<text x="901.7" y="686.8" font-size="11" font-weight="bold" fill="#111" text-anchor="end" textLength="49.0" lengthAdjust="spacingAndGlyphs">49.51 ° C</text>
<text x="971.7" y="686.8" font-size="11" font-weight="bold" fill="#111" text-anchor="end" textLength="49.0" lengthAdjust="spacingAndGlyphs">77.32 ° C</text>
<text x="1046.7" y="686.8" font-size="11" font-weight="bold" fill="#111" text-anchor="end" textLength="49.0" lengthAdjust="spacingAndGlyphs">62.53 ° C</text>
<text x="1121.7" y="686.8" font-size="11" font-weight="bold" fill="#111" text-anchor="end" textLength="49.0" lengthAdjust="spacingAndGlyphs">61.96 ° C</text>
<text x="309.5" y="700.8" font-size="11" font-weight="bold" fill="#111" textLength="72.8" lengthAdjust="spacingAndGlyphs">H08-043+IJ01</text>
<text x="396.2" y="700.8" font-size="11" font-weight="bold" fill="#111" textLength="278.5" lengthAdjust="spacingAndGlyphs">SEPARATOR FAN MOTOR POWER [0 - 600.0 kW]</text>
<text x="735.4" y="700.8" font-size="11" font-weight="bold" fill="#111" textLength="76.3" lengthAdjust="spacingAndGlyphs">0 - 600.0 [kW]</text>
<text x="901.7" y="700.8" font-size="11" font-weight="bold" fill="#111" text-anchor="end" textLength="57.7" lengthAdjust="spacingAndGlyphs">337.98 kW</text>
<text x="971.7" y="700.8" font-size="11" font-weight="bold" fill="#111" text-anchor="end" textLength="57.7" lengthAdjust="spacingAndGlyphs">458.08 kW</text>
<text x="1046.7" y="700.8" font-size="11" font-weight="bold" fill="#111" text-anchor="end" textLength="57.7" lengthAdjust="spacingAndGlyphs">373.40 kW</text>
<text x="1121.7" y="700.8" font-size="11" font-weight="bold" fill="#111" text-anchor="end" textLength="57.7" lengthAdjust="spacingAndGlyphs">349.33 kW</text>
<text x="309.5" y="714.8" font-size="11" font-weight="bold" fill="#111" textLength="74.1" lengthAdjust="spacingAndGlyphs">H08-043+IV01</text>
<text x="396.2" y="714.8" font-size="11" font-weight="bold" fill="#111" textLength="328.9" lengthAdjust="spacingAndGlyphs">SEPARATOR FAN VIBRATION DRIVE SIDE [0 - 20.0 mm/s]</text>
<text x="735.4" y="714.8" font-size="11" font-weight="bold" fill="#111" textLength="82.9" lengthAdjust="spacingAndGlyphs">0 - 20.0 [mm/s]</text>
<text x="901.7" y="714.8" font-size="11" font-weight="bold" fill="#111" text-anchor="end" textLength="57.7" lengthAdjust="spacingAndGlyphs">0.47 mm/s</text>
<text x="971.7" y="714.8" font-size="11" font-weight="bold" fill="#111" text-anchor="end" textLength="57.7" lengthAdjust="spacingAndGlyphs">1.22 mm/s</text>
<text x="1046.7" y="714.8" font-size="11" font-weight="bold" fill="#111" text-anchor="end" textLength="57.7" lengthAdjust="spacingAndGlyphs">0.89 mm/s</text>
<text x="1121.7" y="714.8" font-size="11" font-weight="bold" fill="#111" text-anchor="end" textLength="57.7" lengthAdjust="spacingAndGlyphs">1.00 mm/s</text>
<text x="309.5" y="728.8" font-size="11" font-weight="bold" fill="#111" textLength="74.1" lengthAdjust="spacingAndGlyphs">H08-043+IP01</text>
<text x="396.2" y="728.8" font-size="11" font-weight="bold" fill="#111" textLength="312.3" lengthAdjust="spacingAndGlyphs">SEPARATOR FAN OUTLET PRESSURE [-50 - 5.0 mBar]</text>
<text x="735.4" y="728.8" font-size="11" font-weight="bold" fill="#111" textLength="86.2" lengthAdjust="spacingAndGlyphs">-50 - 5.0 [mBar]</text>
<text x="901.7" y="728.8" font-size="11" font-weight="bold" fill="#111" text-anchor="end" textLength="67.7" lengthAdjust="spacingAndGlyphs">-28.16 mBar</text>
<text x="971.7" y="728.8" font-size="11" font-weight="bold" fill="#111" text-anchor="end" textLength="61.0" lengthAdjust="spacingAndGlyphs">-6.38 mBar</text>
<text x="1046.7" y="728.8" font-size="11" font-weight="bold" fill="#111" text-anchor="end" textLength="67.7" lengthAdjust="spacingAndGlyphs">-22.77 mBar</text>
<text x="1121.7" y="728.8" font-size="11" font-weight="bold" fill="#111" text-anchor="end" textLength="67.7" lengthAdjust="spacingAndGlyphs">-26.28 mBar</text>
<text x="309.5" y="742.8" font-size="11" font-weight="bold" fill="#111" textLength="73.5" lengthAdjust="spacingAndGlyphs">H08-040+IT03</text>
<text x="396.2" y="742.8" font-size="11" font-weight="bold" fill="#111" textLength="314.2" lengthAdjust="spacingAndGlyphs">CEMENT COOLER GEAR TEMPERATURE [0 - 150.0 ° C]</text>
<text x="735.4" y="742.8" font-size="11" font-weight="bold" fill="#111" textLength="74.2" lengthAdjust="spacingAndGlyphs">0 - 150.0 [° C]</text>
<text x="901.7" y="742.8" font-size="11" font-weight="bold" fill="#111" text-anchor="end" textLength="49.0" lengthAdjust="spacingAndGlyphs">54.88 ° C</text>
<text x="971.7" y="742.8" font-size="11" font-weight="bold" fill="#111" text-anchor="end" textLength="49.0" lengthAdjust="spacingAndGlyphs">59.10 ° C</text>
<text x="1046.7" y="742.8" font-size="11" font-weight="bold" fill="#111" text-anchor="end" textLength="49.0" lengthAdjust="spacingAndGlyphs">57.72 ° C</text>
<text x="1121.7" y="742.8" font-size="11" font-weight="bold" fill="#111" text-anchor="end" textLength="49.0" lengthAdjust="spacingAndGlyphs">58.50 ° C</text>
<text x="309.5" y="756.8" font-size="11" font-weight="bold" fill="#111" textLength="69.6" lengthAdjust="spacingAndGlyphs">H08-043+II01</text>
<text x="396.2" y="756.8" font-size="11" font-weight="bold" fill="#111" textLength="260.6" lengthAdjust="spacingAndGlyphs">SEPARATOR FAN MOTOR AMPS [0 - 150.0 %]</text>
<text x="735.4" y="756.8" font-size="11" font-weight="bold" fill="#111" textLength="69.0" lengthAdjust="spacingAndGlyphs">0 - 150.0 [%]</text>
<text x="901.7" y="756.8" font-size="11" font-weight="bold" fill="#111" text-anchor="end" textLength="43.8" lengthAdjust="spacingAndGlyphs">58.67 %</text>
<text x="971.7" y="756.8" font-size="11" font-weight="bold" fill="#111" text-anchor="end" textLength="43.8" lengthAdjust="spacingAndGlyphs">79.75 %</text>
<text x="1046.7" y="756.8" font-size="11" font-weight="bold" fill="#111" text-anchor="end" textLength="43.8" lengthAdjust="spacingAndGlyphs">64.86 %</text>
<text x="1121.7" y="756.8" font-size="11" font-weight="bold" fill="#111" text-anchor="end" textLength="43.8" lengthAdjust="spacingAndGlyphs">60.63 %</text>
<defs><radialGradient id="infog" cx="0.4" cy="0.35" r="0.7"><stop offset="0" stop-color="#8cc8ff"/><stop offset="1" stop-color="#2a7ad8"/></radialGradient></defs>
<circle cx="550" cy="769" r="7.5" fill="url(#infog)"/>
<rect x="549" y="767" width="2.2" height="6" fill="#fff"/><rect x="549" y="764" width="2.2" height="2" fill="#fff"/>
<text x="563.5" y="777.5" font-size="12" fill="#222" textLength="30" lengthAdjust="spacingAndGlyphs" font-style="italic">From</text>
<text x="597.5" y="777.5" font-size="12" font-weight="bold" fill="#111" textLength="128" lengthAdjust="spacingAndGlyphs" font-style="italic">2013-08-06 11:17:00</text>
<text x="729.5" y="777.5" font-size="12" fill="#222" textLength="11" lengthAdjust="spacingAndGlyphs" font-style="italic">to</text>
<text x="745" y="777.5" font-size="12" font-weight="bold" fill="#111" textLength="129.5" lengthAdjust="spacingAndGlyphs" font-style="italic">2013-08-10 22:05:00</text>
<text x="388" y="803.2" font-size="16" textLength="62" lengthAdjust="spacingAndGlyphs" style='font-family:"Liberation Serif",serif'>Start time</text>
<rect x="455.5" y="788.5" width="146" height="20" fill="#fff" stroke="#b8bcc4" stroke-width="1"/>
<text x="458.5" y="803.2" font-size="13.5" fill="#111" textLength="125" lengthAdjust="spacingAndGlyphs">2013-08-06 11:17:00</text>
<defs><linearGradient id="btng608" x1="0" y1="0" x2="0" y2="1"><stop offset="0" stop-color="#f4f4f4"/><stop offset="0.5" stop-color="#e6e6e6"/><stop offset="0.55" stop-color="#d8d8d8"/><stop offset="1" stop-color="#cfcfcf"/></linearGradient></defs>
<rect x="608.5" y="788.5" width="32" height="20" rx="2.5" fill="url(#btng608)" stroke="#707070" stroke-width="1"/>
<text x="624.5" y="803" font-size="11" fill="#222" text-anchor="middle">...</text>
<text x="647" y="803.2" font-size="16" textLength="57" lengthAdjust="spacingAndGlyphs" style='font-family:"Liberation Serif",serif'>End time</text>
<rect x="709.5" y="788.5" width="146" height="20" fill="#fff" stroke="#b8bcc4" stroke-width="1"/>
<text x="712.5" y="803.2" font-size="13.5" fill="#111" textLength="125" lengthAdjust="spacingAndGlyphs">2013-08-10 22:05:00</text>
<defs><linearGradient id="btng862" x1="0" y1="0" x2="0" y2="1"><stop offset="0" stop-color="#f4f4f4"/><stop offset="0.5" stop-color="#e6e6e6"/><stop offset="0.55" stop-color="#d8d8d8"/><stop offset="1" stop-color="#cfcfcf"/></linearGradient></defs>
<rect x="862.5" y="788.5" width="32" height="20" rx="2.5" fill="url(#btng862)" stroke="#707070" stroke-width="1"/>
<text x="878.5" y="803" font-size="11" fill="#222" text-anchor="middle">...</text>
<g transform="translate(901.8,786.8)"><path d="M0.5 7 C1 3,5 0.3,9 1.4 L12 2.6 L15.2 0.8 L15.2 7 L9.3 7 L11.3 5.3 C9 3.9,5 3.6,3 7 Z" fill="#3a6cbc" stroke="#1f4c9c" stroke-width="0.7"/><path d="M15.5 9.2 C15 13,11 15.7,7 14.6 L4 13.4 L0.8 15.2 L0.8 9.2 L6.7 9.2 L4.7 10.9 C7 12.3,11 12.6,13 9.2 Z" fill="#3a6cbc" stroke="#1f4c9c" stroke-width="0.7"/><path d="M3 5 C5 2.5,8 2.2,11 3.6" fill="none" stroke="#9cc0ec" stroke-width="1"/><path d="M13 11 C11 13.5,8 13.8,5 12.4" fill="none" stroke="#9cc0ec" stroke-width="1"/></g>
<g transform="translate(941,782)"><path d="M1 1 L16 17" stroke="#c0c0c0" stroke-width="2"/><circle cx="16" cy="3.5" r="3" fill="none" stroke="#c0c0c0" stroke-width="1.8"/><path d="M14 6 L2 18" stroke="#2a70d8" stroke-width="3" stroke-linecap="round"/><path d="M9 10 L18 19" stroke="#e03838" stroke-width="3" stroke-linecap="round"/><ellipse cx="10" cy="19" rx="7" ry="1.2" fill="#d8d8d8"/></g>
<rect x="963" y="804.5" width="5" height="1.5" fill="#2020e0"/>
<g transform="translate(967,789)"><path d="M1 1 H6 L17 12 H12 Z" fill="#20d8d8" stroke="#111" stroke-width="1.6" stroke-linejoin="round"/><path d="M16 1 L2 12" stroke="#111" stroke-width="3.2"/><path d="M15.5 1.4 L2.5 11.6" stroke="#30c8c0" stroke-width="1.2"/></g>
<g transform="translate(990,790)"><rect x="0" y="0" width="16" height="13" fill="#1f4f9a"/><rect x="1.3" y="0.9" width="2.6" height="1.1" fill="#c8d4e4"/><rect x="1.3" y="2.9" width="2.6" height="1.1" fill="#c8d4e4"/><rect x="1.3" y="4.9" width="2.6" height="1.1" fill="#c8d4e4"/><rect x="1.3" y="6.9" width="2.6" height="1.1" fill="#c8d4e4"/><rect x="1.3" y="8.9" width="2.6" height="1.1" fill="#c8d4e4"/><rect x="1.3" y="10.9" width="2.6" height="1.1" fill="#c8d4e4"/><rect x="5.0" y="0.9" width="2.6" height="1.1" fill="#c8d4e4"/><rect x="5.0" y="2.9" width="2.6" height="1.1" fill="#c8d4e4"/><rect x="5.0" y="4.9" width="2.6" height="1.1" fill="#c8d4e4"/><rect x="5.0" y="6.9" width="2.6" height="1.1" fill="#c8d4e4"/><rect x="5.0" y="8.9" width="2.6" height="1.1" fill="#c8d4e4"/><rect x="5.0" y="10.9" width="2.6" height="1.1" fill="#c8d4e4"/><rect x="8.700000000000001" y="0.9" width="2.6" height="1.1" fill="#c8d4e4"/><rect x="8.700000000000001" y="2.9" width="2.6" height="1.1" fill="#c8d4e4"/><rect x="8.700000000000001" y="4.9" width="2.6" height="1.1" fill="#c8d4e4"/><rect x="8.700000000000001" y="6.9" width="2.6" height="1.1" fill="#c8d4e4"/><rect x="8.700000000000001" y="8.9" width="2.6" height="1.1" fill="#c8d4e4"/><rect x="8.700000000000001" y="10.9" width="2.6" height="1.1" fill="#c8d4e4"/><rect x="12.400000000000002" y="0.9" width="2.6" height="1.1" fill="#c8d4e4"/><rect x="12.400000000000002" y="2.9" width="2.6" height="1.1" fill="#c8d4e4"/><rect x="12.400000000000002" y="4.9" width="2.6" height="1.1" fill="#c8d4e4"/><rect x="12.400000000000002" y="6.9" width="2.6" height="1.1" fill="#c8d4e4"/><rect x="12.400000000000002" y="8.9" width="2.6" height="1.1" fill="#c8d4e4"/><rect x="12.400000000000002" y="10.9" width="2.6" height="1.1" fill="#c8d4e4"/></g>
<g transform="translate(1011,787)"><path d="M0.5 5 H8 V1 L14 7.5 L8 14 V10 H0.5 Z" fill="#4a86c8" stroke="#2a5a98" stroke-width="0.8"/><rect x="14.5" y="0.5" width="3" height="14" fill="#3a76b8" stroke="#2a5a98" stroke-width="0.6"/></g>
<rect x="238" y="1" width="4" height="831" fill="#f6f6f6"/>
<rect x="242" y="1" width="1" height="831" fill="#fbfbfb"/>
<rect x="244" y="1" width="1" height="831" fill="#1e1e1e"/>
<rect x="0" y="0" width="1172" height="1" fill="#a3b5cb"/>
<rect x="0" y="0" width="1" height="833" fill="#6e7f92"/>
<rect x="1171" y="0" width="1" height="833" fill="#6e7f92"/>
<rect x="0" y="832" width="1172" height="1" fill="#6e7f92"/>
</svg>
</body></html>
